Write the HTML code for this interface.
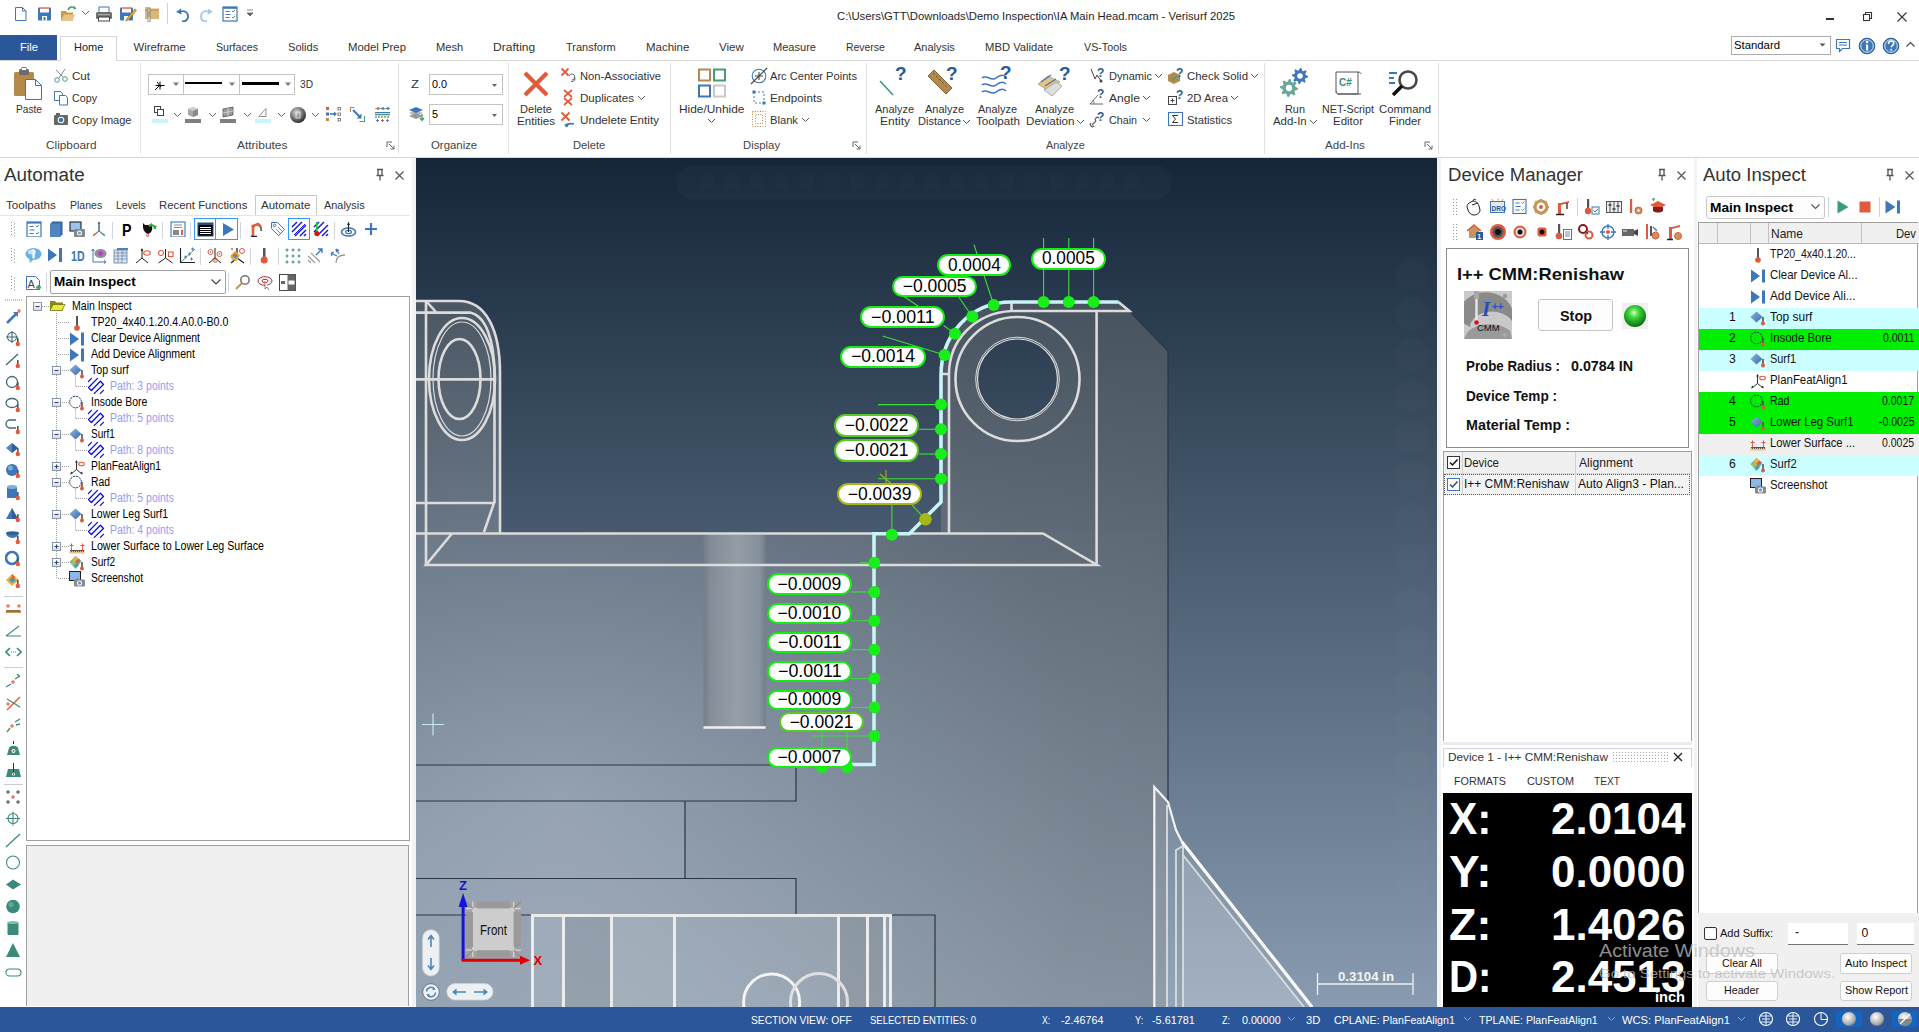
<!DOCTYPE html><html><head><meta charset="utf-8"><style>
*{margin:0;padding:0;box-sizing:border-box}
html,body{width:1919px;height:1032px;overflow:hidden;background:#fff;position:relative;font-family:"Liberation Sans",sans-serif}
.a{position:absolute;display:block}
.t{position:absolute;white-space:nowrap;line-height:1;transform-origin:0 0;font-family:"Liberation Sans",sans-serif}
</style></head><body><div class="t" style="left:837.00px;top:11.43px;font-size:11.3px;color:#1e1e1e;">C:\Users\GTT\Downloads\Demo Inspection\IA Main Head.mcam - Verisurf 2025</div>
<div class="a" style="left:1826px;top:18px;width:7.5px;height:1.6px;background:#333;"></div>
<svg class="a" style="left:1860px;top:10px;" width="14" height="14" viewBox="0 0 14 14"><path d="M3.5 4.5h6v6h-6z M5.5 4.5v-2h6v6h-2" fill="none" stroke="#333" stroke-width="1.1"/></svg>
<svg class="a" style="left:1895px;top:10px;" width="14" height="14" viewBox="0 0 14 14"><path d="M2.5 2.5l9 9M11.5 2.5l-9 9" stroke="#333" stroke-width="1.1"/></svg>
<div class="a" style="left:0px;top:60px;width:1919px;height:1px;background:#d6d6d6;"></div>
<div class="a" style="left:0px;top:35px;width:57px;height:25px;background:#2b579a;"></div>
<div class="t" style="left:20.00px;top:42.43px;font-size:11.3px;color:#fff;transform:scaleX(0.9879);">File</div>
<div class="a" style="left:60px;top:36px;width:57px;height:25px;background:#fff;border:1px solid #d6d6d6;border-bottom:none"></div>
<div class="t" style="left:74.30px;top:42.43px;font-size:11.3px;color:#222;transform:scaleX(0.9754);">Home</div>
<div class="t" style="left:133.50px;top:42.43px;font-size:11.3px;color:#333;">Wireframe</div>
<div class="t" style="left:216.20px;top:42.43px;font-size:11.3px;color:#333;transform:scaleX(0.9416);">Surfaces</div>
<div class="t" style="left:288.00px;top:42.43px;font-size:11.3px;color:#333;transform:scaleX(0.9817);">Solids</div>
<div class="t" style="left:348.20px;top:42.43px;font-size:11.3px;color:#333;transform:scaleX(1.0035);">Model Prep</div>
<div class="t" style="left:436.20px;top:42.43px;font-size:11.3px;color:#333;transform:scaleX(0.9881);">Mesh</div>
<div class="t" style="left:493.20px;top:42.43px;font-size:11.3px;color:#333;transform:scaleX(1.0688);">Drafting</div>
<div class="t" style="left:565.70px;top:42.43px;font-size:11.3px;color:#333;transform:scaleX(0.9750);">Transform</div>
<div class="t" style="left:646.20px;top:42.43px;font-size:11.3px;color:#333;transform:scaleX(1.0137);">Machine</div>
<div class="t" style="left:718.70px;top:42.43px;font-size:11.3px;color:#333;transform:scaleX(1.0278);">View</div>
<div class="t" style="left:773.20px;top:42.43px;font-size:11.3px;color:#333;transform:scaleX(0.9782);">Measure</div>
<div class="t" style="left:846.00px;top:42.43px;font-size:11.3px;color:#333;transform:scaleX(0.9224);">Reverse</div>
<div class="t" style="left:913.80px;top:42.43px;font-size:11.3px;color:#333;transform:scaleX(0.9699);">Analysis</div>
<div class="t" style="left:985.40px;top:42.43px;font-size:11.3px;color:#333;transform:scaleX(0.9963);">MBD Validate</div>
<div class="t" style="left:1083.60px;top:42.43px;font-size:11.3px;color:#333;transform:scaleX(0.9485);">VS-Tools</div>
<div class="a" style="left:1731px;top:36px;width:100px;height:19px;background:#fff;border:1px solid #adadad"></div>
<div class="t" style="left:1734.00px;top:40.43px;font-size:11.3px;color:#000;transform:scaleX(1.0033);">Standard</div>
<svg class="a" style="left:1818px;top:42px;" width="10" height="6" viewBox="0 0 10 6"><path d="M1.5 1.5h6l-3 3z" fill="#555"/></svg>
<div class="a" style="left:0px;top:157px;width:1919px;height:1px;background:#d6d6d6;"></div>
<div class="a" style="left:140px;top:63px;width:1px;height:91px;background:#e1e1e1;"></div>
<div class="a" style="left:398px;top:63px;width:1px;height:91px;background:#e1e1e1;"></div>
<div class="a" style="left:508px;top:63px;width:1px;height:91px;background:#e1e1e1;"></div>
<div class="a" style="left:670px;top:63px;width:1px;height:91px;background:#e1e1e1;"></div>
<div class="a" style="left:866px;top:63px;width:1px;height:91px;background:#e1e1e1;"></div>
<div class="a" style="left:1264px;top:63px;width:1px;height:91px;background:#e1e1e1;"></div>
<div class="a" style="left:1438px;top:63px;width:1px;height:91px;background:#e1e1e1;"></div>
<div class="t" style="left:46.20px;top:140.43px;font-size:11.3px;color:#444;transform:scaleX(1.0442);">Clipboard</div>
<div class="t" style="left:237.00px;top:140.43px;font-size:11.3px;color:#444;transform:scaleX(1.0578);">Attributes</div>
<div class="t" style="left:430.50px;top:140.43px;font-size:11.3px;color:#444;transform:scaleX(1.0076);">Organize</div>
<div class="t" style="left:573.20px;top:140.43px;font-size:11.3px;color:#444;transform:scaleX(0.9891);">Delete</div>
<div class="t" style="left:743.00px;top:140.43px;font-size:11.3px;color:#444;">Display</div>
<div class="t" style="left:1045.80px;top:140.43px;font-size:11.3px;color:#444;transform:scaleX(0.9627);">Analyze</div>
<div class="t" style="left:1324.60px;top:140.43px;font-size:11.3px;color:#444;transform:scaleX(1.0242);">Add-Ins</div>
<svg class="a" style="left:386px;top:141px;" width="9" height="9" viewBox="0 0 9 9"><path d="M1 6V1h5 M3 3l5 5 M8 4.5V8H4.5" fill="none" stroke="#666" stroke-width="1"/></svg>
<svg class="a" style="left:852px;top:141px;" width="9" height="9" viewBox="0 0 9 9"><path d="M1 6V1h5 M3 3l5 5 M8 4.5V8H4.5" fill="none" stroke="#666" stroke-width="1"/></svg>
<svg class="a" style="left:1424px;top:141px;" width="9" height="9" viewBox="0 0 9 9"><path d="M1 6V1h5 M3 3l5 5 M8 4.5V8H4.5" fill="none" stroke="#666" stroke-width="1"/></svg>
<div class="t" style="left:15.50px;top:104.43px;font-size:11.3px;color:#333;transform:scaleX(0.8997);">Paste</div>
<div class="t" style="left:72.00px;top:70.93px;font-size:11.3px;color:#333;transform:scaleX(1.0244);">Cut</div>
<div class="t" style="left:72.00px;top:92.93px;font-size:11.3px;color:#333;transform:scaleX(0.9475);">Copy</div>
<div class="t" style="left:72.00px;top:114.93px;font-size:11.3px;color:#333;transform:scaleX(0.9764);">Copy Image</div>
<div class="a" style="left:148px;top:74px;width:147px;height:21px;background:#fff;border:1px solid #c3c3c3"></div>
<div class="a" style="left:183px;top:74px;width:1px;height:21px;background:#c3c3c3;"></div>
<div class="a" style="left:239px;top:74px;width:1px;height:21px;background:#c3c3c3;"></div>
<div class="t" style="left:300.00px;top:79.43px;font-size:11.3px;color:#333;transform:scaleX(0.9005);">3D</div>
<div class="t" style="left:411.00px;top:79.43px;font-size:11.3px;color:#333;transform:scaleX(1.1606);">Z</div>
<div class="a" style="left:429px;top:74px;width:74px;height:21px;background:#fff;border:1px solid #c3c3c3"></div>
<div class="t" style="left:432.00px;top:79.43px;font-size:11.3px;color:#000;transform:scaleX(0.9550);">0.0</div>
<div class="a" style="left:429px;top:104px;width:74px;height:21px;background:#fff;border:1px solid #c3c3c3"></div>
<div class="t" style="left:432.00px;top:109.43px;font-size:11.3px;color:#000;transform:scaleX(0.9567);">5</div>
<svg class="a" style="left:491px;top:83px;" width="8" height="5" viewBox="0 0 8 5"><path d="M1 1h5l-2.5 3z" fill="#666"/></svg>
<svg class="a" style="left:491px;top:113px;" width="8" height="5" viewBox="0 0 8 5"><path d="M1 1h5l-2.5 3z" fill="#666"/></svg>
<div class="t" style="left:520.00px;top:103.93px;font-size:11.3px;color:#333;transform:scaleX(0.9799);">Delete</div>
<div class="t" style="left:517.00px;top:116.43px;font-size:11.3px;color:#333;transform:scaleX(1.0253);">Entities</div>
<div class="t" style="left:580.00px;top:70.93px;font-size:11.3px;color:#333;transform:scaleX(0.9921);">Non-Associative</div>
<div class="t" style="left:580.00px;top:92.93px;font-size:11.3px;color:#333;transform:scaleX(1.0233);">Duplicates</div>
<div class="t" style="left:580.00px;top:114.93px;font-size:11.3px;color:#333;transform:scaleX(1.0308);">Undelete Entity</div>
<div class="t" style="left:678.75px;top:103.93px;font-size:11.3px;color:#333;transform:scaleX(1.0534);">Hide/Unhide</div>
<div class="t" style="left:770.00px;top:70.93px;font-size:11.3px;color:#333;transform:scaleX(0.9823);">Arc Center Points</div>
<div class="t" style="left:770.00px;top:92.93px;font-size:11.3px;color:#333;transform:scaleX(1.0347);">Endpoints</div>
<div class="t" style="left:770.00px;top:114.93px;font-size:11.3px;color:#333;transform:scaleX(0.9892);">Blank</div>
<div class="t" style="left:875.00px;top:103.93px;font-size:11.3px;color:#333;transform:scaleX(0.9702);">Analyze</div>
<div class="t" style="left:879.50px;top:116.43px;font-size:11.3px;color:#333;transform:scaleX(1.0619);">Entity</div>
<div class="t" style="left:925.00px;top:103.93px;font-size:11.3px;color:#333;transform:scaleX(0.9702);">Analyze</div>
<div class="t" style="left:918.10px;top:116.43px;font-size:11.3px;color:#333;transform:scaleX(0.9782);">Distance</div>
<div class="t" style="left:978.00px;top:103.93px;font-size:11.3px;color:#333;transform:scaleX(0.9702);">Analyze</div>
<div class="t" style="left:975.50px;top:116.43px;font-size:11.3px;color:#333;transform:scaleX(1.0301);">Toolpath</div>
<div class="t" style="left:1034.50px;top:103.93px;font-size:11.3px;color:#333;transform:scaleX(0.9702);">Analyze</div>
<div class="t" style="left:1025.75px;top:116.43px;font-size:11.3px;color:#333;transform:scaleX(1.0293);">Deviation</div>
<div class="t" style="left:1109.00px;top:70.93px;font-size:11.3px;color:#333;transform:scaleX(0.9782);">Dynamic</div>
<div class="t" style="left:1109.00px;top:92.93px;font-size:11.3px;color:#333;transform:scaleX(1.0727);">Angle</div>
<div class="t" style="left:1109.00px;top:114.93px;font-size:11.3px;color:#333;transform:scaleX(0.9485);">Chain</div>
<div class="t" style="left:1187.00px;top:70.93px;font-size:11.3px;color:#333;transform:scaleX(1.0119);">Check Solid</div>
<div class="t" style="left:1187.00px;top:92.93px;font-size:11.3px;color:#333;transform:scaleX(1.0037);">2D Area</div>
<div class="t" style="left:1187.00px;top:114.93px;font-size:11.3px;color:#333;transform:scaleX(0.9956);">Statistics</div>
<div class="t" style="left:1285.00px;top:103.93px;font-size:11.3px;color:#333;transform:scaleX(0.9645);">Run</div>
<div class="t" style="left:1273.30px;top:116.43px;font-size:11.3px;color:#333;transform:scaleX(1.0118);">Add-In</div>
<div class="t" style="left:1322.00px;top:103.93px;font-size:11.3px;color:#333;transform:scaleX(0.9518);">NET-Script</div>
<div class="t" style="left:1333.00px;top:116.43px;font-size:11.3px;color:#333;transform:scaleX(1.0162);">Editor</div>
<div class="t" style="left:1379.00px;top:103.93px;font-size:11.3px;color:#333;">Command</div>
<div class="t" style="left:1389.00px;top:116.43px;font-size:11.3px;color:#333;">Finder</div>
<div class="a" style="left:416px;top:158px;width:1021px;height:849px;background:linear-gradient(#15263a,#889bb0);"></div>
<div class="a" style="left:412px;top:158px;width:4px;height:849px;background:#f3f3f3;"></div>
<div class="a" style="left:1437px;top:158px;width:4px;height:849px;background:#f3f3f3;"></div>
<div class="a" style="left:1694px;top:158px;width:3px;height:849px;background:#f3f3f3;"></div>
<div class="a" style="left:0px;top:1007px;width:1919px;height:25px;background:#2b579a;"></div>
<div class="t" style="left:751.30px;top:1014.18px;font-size:11.6px;color:#fff;transform:scaleX(0.8845);">SECTION VIEW: OFF</div>
<div class="t" style="left:870.00px;top:1014.18px;font-size:11.6px;color:#fff;transform:scaleX(0.8181);">SELECTED ENTITIES: 0</div>
<div class="t" style="left:1041.80px;top:1014.18px;font-size:11.6px;color:#fff;transform:scaleX(0.7480);">X:</div>
<div class="t" style="left:1060.60px;top:1014.18px;font-size:11.6px;color:#fff;transform:scaleX(0.9259);">-2.46764</div>
<div class="t" style="left:1134.80px;top:1014.18px;font-size:11.6px;color:#fff;transform:scaleX(0.7943);">Y:</div>
<div class="t" style="left:1152.00px;top:1014.18px;font-size:11.6px;color:#fff;transform:scaleX(0.9347);">-5.61781</div>
<div class="t" style="left:1221.90px;top:1014.18px;font-size:11.6px;color:#fff;transform:scaleX(0.7868);">Z:</div>
<div class="t" style="left:1242.00px;top:1014.18px;font-size:11.6px;color:#fff;transform:scaleX(0.9229);">0.00000</div>
<div class="t" style="left:1305.70px;top:1014.18px;font-size:11.6px;color:#fff;transform:scaleX(0.9650);">3D</div>
<div class="t" style="left:1334.40px;top:1014.18px;font-size:11.6px;color:#fff;transform:scaleX(0.9191);">CPLANE: PlanFeatAlign1</div>
<div class="t" style="left:1479.30px;top:1014.18px;font-size:11.6px;color:#fff;transform:scaleX(0.9114);">TPLANE: PlanFeatAlign1</div>
<div class="t" style="left:1622.00px;top:1014.18px;font-size:11.6px;color:#fff;transform:scaleX(0.9628);">WCS: PlanFeatAlign1</div>
<svg class="a" style="left:1286.7px;top:1016px;" width="9" height="6" viewBox="0 0 9 6"><path d="M1 1l3.5 3.5L8 1" fill="none" stroke="#8fa8d0" stroke-width="1"/></svg>
<svg class="a" style="left:1463px;top:1016px;" width="9" height="6" viewBox="0 0 9 6"><path d="M1 1l3.5 3.5L8 1" fill="none" stroke="#8fa8d0" stroke-width="1"/></svg>
<svg class="a" style="left:1607px;top:1016px;" width="9" height="6" viewBox="0 0 9 6"><path d="M1 1l3.5 3.5L8 1" fill="none" stroke="#8fa8d0" stroke-width="1"/></svg>
<svg class="a" style="left:1737px;top:1016px;" width="9" height="6" viewBox="0 0 9 6"><path d="M1 1l3.5 3.5L8 1" fill="none" stroke="#8fa8d0" stroke-width="1"/></svg>
<svg class="a" style="left:0;top:0" width="1919" height="1032" viewBox="0 0 1919 1032"><defs><linearGradient id="vbg" x1="0" y1="158" x2="0" y2="1007" gradientUnits="userSpaceOnUse"><stop offset="0" stop-color="#15263a"/><stop offset="1" stop-color="#889bb0"/></linearGradient><linearGradient id="hl" x1="416" y1="600" x2="1168" y2="800" gradientUnits="userSpaceOnUse"><stop offset="0" stop-color="#b8d0ea" stop-opacity="0.15"/><stop offset="0.45" stop-color="#b8d0ea" stop-opacity="0.09"/><stop offset="1" stop-color="#fff" stop-opacity="0"/></linearGradient><linearGradient id="pin" x1="703.5" y1="0" x2="765.7" y2="0" gradientUnits="userSpaceOnUse"><stop offset="0" stop-color="#737d8a"/><stop offset="0.12" stop-color="#858f9a"/><stop offset="0.55" stop-color="#97a1ab"/><stop offset="0.9" stop-color="#8a949f"/><stop offset="1" stop-color="#737d8a"/></linearGradient><clipPath id="vclip"><rect x="416" y="158" width="1021" height="849"/></clipPath><radialGradient id="bodyg" cx="560" cy="800" r="700" fx="560" fy="800" gradientUnits="userSpaceOnUse"><stop offset="0" stop-color="#d0d4d8"/><stop offset="0.4" stop-color="#a6aaae"/><stop offset="0.75" stop-color="#888888"/><stop offset="1" stop-color="#808080"/></radialGradient></defs><g clip-path="url(#vclip)"><rect x="416" y="158" width="1021" height="849" fill="url(#vbg)"/><rect x="676" y="165" width="496" height="34" rx="17" fill="#9ab" fill-opacity="0.035"/><rect x="700" y="175" width="14" height="14" rx="2" fill="#fff" fill-opacity="0.01"/><rect x="725" y="175" width="14" height="14" rx="2" fill="#fff" fill-opacity="0.01"/><rect x="750" y="175" width="14" height="14" rx="2" fill="#fff" fill-opacity="0.01"/><rect x="775" y="175" width="14" height="14" rx="2" fill="#fff" fill-opacity="0.01"/><rect x="800" y="175" width="14" height="14" rx="2" fill="#fff" fill-opacity="0.01"/><rect x="825" y="175" width="14" height="14" rx="2" fill="#fff" fill-opacity="0.01"/><rect x="850" y="175" width="14" height="14" rx="2" fill="#fff" fill-opacity="0.01"/><rect x="875" y="175" width="14" height="14" rx="2" fill="#fff" fill-opacity="0.01"/><rect x="900" y="175" width="14" height="14" rx="2" fill="#fff" fill-opacity="0.01"/><rect x="925" y="175" width="14" height="14" rx="2" fill="#fff" fill-opacity="0.01"/><rect x="950" y="175" width="14" height="14" rx="2" fill="#fff" fill-opacity="0.01"/><rect x="975" y="175" width="14" height="14" rx="2" fill="#fff" fill-opacity="0.01"/><rect x="1000" y="175" width="14" height="14" rx="2" fill="#fff" fill-opacity="0.01"/><rect x="1025" y="175" width="14" height="14" rx="2" fill="#fff" fill-opacity="0.01"/><rect x="1050" y="175" width="14" height="14" rx="2" fill="#fff" fill-opacity="0.01"/><rect x="1075" y="175" width="14" height="14" rx="2" fill="#fff" fill-opacity="0.01"/><rect x="1100" y="175" width="14" height="14" rx="2" fill="#fff" fill-opacity="0.01"/><rect x="1125" y="175" width="14" height="14" rx="2" fill="#fff" fill-opacity="0.01"/><circle cx="1412" cy="273" r="17" fill="#fff" fill-opacity="0.015"/><circle cx="1412" cy="314" r="17" fill="#fff" fill-opacity="0.015"/><circle cx="1412" cy="355" r="17" fill="#fff" fill-opacity="0.015"/><circle cx="1412" cy="396" r="17" fill="#fff" fill-opacity="0.015"/><circle cx="1412" cy="437" r="17" fill="#fff" fill-opacity="0.015"/><circle cx="1412" cy="478" r="17" fill="#fff" fill-opacity="0.015"/><circle cx="1412" cy="519" r="17" fill="#fff" fill-opacity="0.015"/><circle cx="1412" cy="560" r="17" fill="#fff" fill-opacity="0.015"/><circle cx="1412" cy="601" r="17" fill="#fff" fill-opacity="0.015"/><circle cx="1412" cy="642" r="17" fill="#fff" fill-opacity="0.015"/><circle cx="1412" cy="683" r="17" fill="#fff" fill-opacity="0.015"/><circle cx="1412" cy="724" r="17" fill="#fff" fill-opacity="0.015"/><circle cx="1412" cy="765" r="17" fill="#fff" fill-opacity="0.015"/><circle cx="1412" cy="806" r="17" fill="#fff" fill-opacity="0.015"/><circle cx="1412" cy="847" r="17" fill="#fff" fill-opacity="0.015"/><circle cx="1412" cy="888" r="17" fill="#fff" fill-opacity="0.015"/><path d="M416 533 H1168 V1007 H416 Z" fill="url(#bodyg)" fill-opacity="0.36"/><path d="M416 301 H459 C486 301 500 330 500 373 V533 H416 Z" fill="url(#bodyg)" fill-opacity="0.36"/><path d="M941 533 V375 C941 330 970 302 1011 302 H1118.5 L1129.3 311.2 L1168 351 V533 Z" fill="url(#bodyg)" fill-opacity="0.36"/><path d="M452 533 H1043 L1097 565 H426 Z" fill="#000" fill-opacity="0.02"/><circle cx="1017.5" cy="379" r="40" fill="url(#vbg)"/><path d="M416 533 H1168 V1007 H416 Z" fill="url(#hl)" fill-opacity="0.3"/><rect x="416" y="801" width="269" height="78" fill="#fff" fill-opacity="0.05"/><rect x="416" y="765" width="380" height="36" fill="#fff" fill-opacity="0.03"/><rect x="416" y="879" width="380" height="36" fill="#fff" fill-opacity="0.04"/><rect x="532" y="915" width="359" height="92" fill="#fff" fill-opacity="0.09"/><rect x="838" y="915" width="47" height="92" fill="#000" fill-opacity="0.06"/><rect x="703.5" y="535" width="62.2" height="193" fill="url(#pin)" fill-opacity="0.9"/><path d="M703.5 727.5 H765.7" stroke="#f0f0f0" stroke-width="2.4"/><path d="M1129.3 311.2 L1168 351 V802" stroke="#2c3642" stroke-width="1.2" fill="none"/><path d="M416 765 H870 M416 801 H796 V765 M685 801 V878.5 M416 878.5 H796 V915 M416 915 H935 V1007" stroke="#2c3642" stroke-width="1.2" fill="none"/><path d="M416 301 H459 C486 301 500 330 500 373 V533" stroke="#dcdcdc" stroke-width="2.6" fill="none"/><path d="M416 312.6 H470 C486 316 494 340 494.5 373 V503" stroke="#dcdcdc" stroke-width="2.6" fill="none"/><path d="M426 301 V565 M416 379.4 H494 M416 503 H494 L484 532" stroke="#dcdcdc" stroke-width="2.6" fill="none"/><ellipse cx="462" cy="379" rx="33" ry="61" stroke="#dcdcdc" stroke-width="2.6" fill="none"/><ellipse cx="462" cy="379" rx="29" ry="57" stroke="#dcdcdc" stroke-width="1.2" fill="none"/><ellipse cx="459.5" cy="379" rx="21" ry="40" stroke="#dcdcdc" stroke-width="2.6" fill="none"/><path d="M426 301 L436 312" stroke="#dcdcdc" stroke-width="2.6" fill="none"/><path d="M416 533.5 H1043 L1097 565 H426 L452 533.5" stroke="#dcdcdc" stroke-width="2.6" fill="none"/><path d="M1011.5 311 H1129.3 L1118.5 302 M1011.5 302 V311 M1011.5 311 C975 313 949 340 949 374 V533 M941 374 H949 M1096.6 311 V565" stroke="#dcdcdc" stroke-width="2.6" fill="none"/><circle cx="1017.5" cy="379" r="62" stroke="#dcdcdc" stroke-width="2.6" fill="none"/><circle cx="1017.5" cy="379" r="40" stroke="#dcdcdc" stroke-width="1.2" fill="none"/><circle cx="1017.5" cy="379" r="41.8" stroke="#dcdcdc" stroke-width="1" fill="none"/><rect x="563.5" y="915" width="47" height="92" fill="#000" fill-opacity="0.07"/><rect x="611" y="915" width="63" height="92" fill="#fff" fill-opacity="0.04"/><path d="M532.5 1007 V915.5 H890.5 V1007 M563.5 915 V1007 M611.5 915 V1007 M674.5 915 V1007 M838.5 915 V1007 M867.5 915 V1007 M884.5 915 V1007" stroke="#ececec" stroke-width="3" fill="none"/><circle cx="771.6" cy="1002" r="28" stroke="#f4f4f4" stroke-width="3" fill="none"/><circle cx="819" cy="1002" r="28.5" stroke="#e0e0e0" stroke-width="3" fill="none"/><path d="M1154 787 L1168 802 L1178 836 L1312 1007 H1154 Z" fill="#fff" fill-opacity="0.1"/><path d="M1183 855 L1304 1007 H1183 Z" fill="#fff" fill-opacity="0.14"/><path d="M1154.3 1007 V787 L1168 802 L1176 830 L1182 842 L1312 1007" stroke="#f4f4f4" stroke-width="2.2" fill="none"/><path d="M1167 1007 V805 M1176 1007 V850 L1183 846 V1007 M1183 855 L1304 1007" stroke="#dcdcdc" stroke-width="1.8" fill="none"/><path d="M1182 842 L1312 1007" stroke="#fafafa" stroke-width="3.2"/><path d="M422 724.5 H444 M433 713.5 V735.5" stroke="#bfe8f0" stroke-width="1.2"/><path d="M1317 984 H1413.5 M1317.5 973 V995 M1413 973 V995" stroke="#f0f0f0" stroke-width="1.3"/></g></svg>
<div class="t" style="left:1338.40px;top:971.42px;font-size:12.5px;color:#f4f4f4;font-weight:bold;transform:scaleX(1.0604);">0.3104 in</div>
<svg class="a" style="left:0;top:0" width="1919" height="1032" viewBox="0 0 1919 1032"><g clip-path="url(#vclip2)"><clipPath id="vclip2"><rect x="416" y="158" width="1021" height="849"/></clipPath><path d="M1118.6 302 H1011.6 C970 302 941 335 941 375.5 V502 L909.4 533.7 H874 V764.5 H849" stroke="#c8f4f8" stroke-width="3.6" fill="none"/><path d="M974 244.7 L993.7 305" stroke="#3cdc3c" stroke-width="1.1"/><path d="M1043.6 238 L1043.6 302" stroke="#3cdc3c" stroke-width="1.1"/><path d="M1068.8 238 L1068.8 302" stroke="#3cdc3c" stroke-width="1.1"/><path d="M1093.6 238 L1093.6 302" stroke="#3cdc3c" stroke-width="1.1"/><path d="M958.4 296.5 L972.3 316.6" stroke="#3cdc3c" stroke-width="1.1"/><path d="M904 296.5 L919 306.7" stroke="#3cdc3c" stroke-width="1.1"/><path d="M943.6 325.5 L955 333.7" stroke="#3cdc3c" stroke-width="1.1"/><path d="M882.6 336 L944.6 355" stroke="#3cdc3c" stroke-width="1.1"/><path d="M878 404.6 L941 404.6" stroke="#3cdc3c" stroke-width="1.1"/><path d="M919 429.3 L941 429.3" stroke="#3cdc3c" stroke-width="1.1"/><path d="M919 454 L941 454" stroke="#3cdc3c" stroke-width="1.1"/><path d="M878 478.7 L941 478.7" stroke="#3cdc3c" stroke-width="1.1"/><path d="M891.9 486 L891.9 534.8" stroke="#3cdc3c" stroke-width="1.1"/><path d="M912 505 L925.5 519.3" stroke="#3cdc3c" stroke-width="1.1"/><path d="M851 592 L874.4 592" stroke="#3cdc3c" stroke-width="1.1"/><path d="M851 620.7 L874.4 620.7" stroke="#3cdc3c" stroke-width="1.1"/><path d="M851 649.7 L874.4 649.7" stroke="#3cdc3c" stroke-width="1.1"/><path d="M851 678.6 L874.4 678.6" stroke="#3cdc3c" stroke-width="1.1"/><path d="M851 707.5 L874.4 707.5" stroke="#3cdc3c" stroke-width="1.1"/><path d="M811 736 L874.4 736" stroke="#3cdc3c" stroke-width="1.1"/><path d="M822 731 L822 767" stroke="#3cdc3c" stroke-width="1.1"/><path d="M847 731 L847 767" stroke="#3cdc3c" stroke-width="1.1"/><path d="M860 562.7 L874.4 562.7" stroke="#3cdc3c" stroke-width="1.1"/><path d="M880 474 L895 487 M886 470 V486" stroke="#9ab51a" stroke-width="1.1"/><circle cx="993.7" cy="305" r="6" fill="#18ee18"/><circle cx="1043.6" cy="302" r="6" fill="#18ee18"/><circle cx="1068.8" cy="302" r="6" fill="#18ee18"/><circle cx="1093.6" cy="302" r="6" fill="#18ee18"/><circle cx="972.3" cy="316.6" r="6" fill="#18ee18"/><circle cx="955" cy="333.7" r="6" fill="#18ee18"/><circle cx="944.6" cy="355" r="6" fill="#18ee18"/><circle cx="941" cy="404.6" r="6" fill="#18ee18"/><circle cx="941" cy="429.3" r="6" fill="#18ee18"/><circle cx="941" cy="454" r="6" fill="#18ee18"/><circle cx="941" cy="478.7" r="6" fill="#18ee18"/><circle cx="891.9" cy="534.8" r="6" fill="#18ee18"/><circle cx="874.4" cy="562.7" r="6" fill="#18ee18"/><circle cx="874.4" cy="592" r="6" fill="#18ee18"/><circle cx="874.4" cy="620.7" r="6" fill="#18ee18"/><circle cx="874.4" cy="649.7" r="6" fill="#18ee18"/><circle cx="874.4" cy="678.6" r="6" fill="#18ee18"/><circle cx="874.4" cy="707.5" r="6" fill="#18ee18"/><circle cx="874.4" cy="736" r="6" fill="#18ee18"/><circle cx="822" cy="767" r="6" fill="#18ee18"/><circle cx="847" cy="767" r="6" fill="#18ee18"/><circle cx="925.5" cy="519.3" r="6.2" fill="#a6b818"/></g></svg>
<div class="a" style="left:936.7px;top:254.2px;width:74.6px;height:22.2px;background:#fff;border:2.3px solid #14ec14;border-radius:11.1px"></div>
<div class="t" style="left:947.65px;top:256.78px;font-size:17.5px;color:#000;transform:scaleX(0.9849);">0.0004</div>
<div class="a" style="left:1030.7px;top:247.6px;width:75.6px;height:22.8px;background:#fff;border:2.3px solid #14ec14;border-radius:11.4px"></div>
<div class="t" style="left:1042.15px;top:250.48px;font-size:17.5px;color:#000;transform:scaleX(0.9849);">0.0005</div>
<div class="a" style="left:891.7px;top:275.6px;width:85.6px;height:21.3px;background:#fff;border:2.3px solid #14ec14;border-radius:10.7px"></div>
<div class="t" style="left:902.70px;top:277.73px;font-size:17.5px;color:#000;">−0.0005</div>
<div class="a" style="left:859.7px;top:306.3px;width:85.6px;height:22.1px;background:#fff;border:2.3px solid #14ec14;border-radius:11.1px"></div>
<div class="t" style="left:870.70px;top:308.83px;font-size:17.5px;color:#000;transform:scaleX(1.0187);">−0.0011</div>
<div class="a" style="left:840.1px;top:345.6px;width:85.7px;height:22.5px;background:#fff;border:2.3px solid #14ec14;border-radius:11.2px"></div>
<div class="t" style="left:851.15px;top:348.33px;font-size:17.5px;color:#000;">−0.0014</div>
<div class="a" style="left:833.7px;top:414.1px;width:85.6px;height:22.8px;background:#fff;border:2.3px solid #55cc22;border-radius:11.4px"></div>
<div class="t" style="left:844.70px;top:416.98px;font-size:17.5px;color:#000;">−0.0022</div>
<div class="a" style="left:833.7px;top:438.6px;width:85.6px;height:23.4px;background:#fff;border:2.3px solid #55cc22;border-radius:11.7px"></div>
<div class="t" style="left:844.70px;top:441.78px;font-size:17.5px;color:#000;">−0.0021</div>
<div class="a" style="left:836.7px;top:483.3px;width:85.6px;height:22.1px;background:#fff;border:2.3px solid #a6b818;border-radius:11.1px"></div>
<div class="t" style="left:847.70px;top:485.83px;font-size:17.5px;color:#000;">−0.0039</div>
<div class="a" style="left:766.7px;top:573.3px;width:85.2px;height:21.6px;background:#fff;border:2.3px solid #14ec14;border-radius:10.8px"></div>
<div class="t" style="left:777.50px;top:575.58px;font-size:17.5px;color:#000;">−0.0009</div>
<div class="a" style="left:766.7px;top:602.6px;width:85.2px;height:21.3px;background:#fff;border:2.3px solid #14ec14;border-radius:10.7px"></div>
<div class="t" style="left:777.50px;top:604.73px;font-size:17.5px;color:#000;">−0.0010</div>
<div class="a" style="left:766.7px;top:631.6px;width:85.2px;height:21.3px;background:#fff;border:2.3px solid #14ec14;border-radius:10.7px"></div>
<div class="t" style="left:777.50px;top:633.73px;font-size:17.5px;color:#000;transform:scaleX(1.0187);">−0.0011</div>
<div class="a" style="left:766.7px;top:660.6px;width:85.2px;height:21.2px;background:#fff;border:2.3px solid #14ec14;border-radius:10.6px"></div>
<div class="t" style="left:777.50px;top:662.68px;font-size:17.5px;color:#000;transform:scaleX(1.0187);">−0.0011</div>
<div class="a" style="left:766.7px;top:689.6px;width:85.2px;height:20.8px;background:#fff;border:2.3px solid #14ec14;border-radius:10.4px"></div>
<div class="t" style="left:777.50px;top:691.48px;font-size:17.5px;color:#000;">−0.0009</div>
<div class="a" style="left:779.1px;top:712.4px;width:84.7px;height:19.8px;background:#fff;border:2.3px solid #55cc22;border-radius:9.9px"></div>
<div class="t" style="left:789.65px;top:713.78px;font-size:17.5px;color:#000;">−0.0021</div>
<div class="a" style="left:766.7px;top:746.6px;width:85.2px;height:21.7px;background:#fff;border:2.3px solid #14ec14;border-radius:10.8px"></div>
<div class="t" style="left:777.50px;top:748.93px;font-size:17.5px;color:#000;">−0.0007</div>
<svg class="a" style="left:416px;top:870px;" width="140" height="137" viewBox="0 0 140 137">
      <rect x="49.8" y="31.8" width="55" height="55.2" fill="#a2a2a2"/>
      <path d="M57 31.8h-0.2v55.2M97.6 31.8v55.2M49.8 38.5h55M49.8 80.2h55" stroke="#d6d6d6" stroke-width="1.3"/>
      <rect x="57" y="38.5" width="40.6" height="41.7" fill="#cdcdcd"/>
      <path d="M49.8 31.8l7.2 6.7M104.8 31.8l-7.2 6.7M49.8 87l7.2-6.8M104.8 87l-7.2-6.8" stroke="#8e8e8e" stroke-width="1.2"/>
      <rect x="61" y="31.8" width="33" height="6.7" fill="#9a9a9a"/><rect x="61" y="80.2" width="33" height="6.8" fill="#9a9a9a"/>
      <rect x="49.8" y="42" width="7.2" height="35" fill="#9a9a9a"/><rect x="97.6" y="42" width="7.2" height="35" fill="#9a9a9a"/>
      <path d="M47.1 90.2 V33" stroke="#1414d8" stroke-width="3"/>
      <path d="M42.6 37 L47.1 23 L51.6 37z" fill="#1414d8"/>
      <path d="M45.6 90.2 H105" stroke="#e00000" stroke-width="3"/>
      <path d="M104 85.7 L114 90.2 L104 94.7z" fill="#e00000"/>
      <text x="43" y="20" font-family="Liberation Sans" font-weight="bold" font-size="13" fill="#1414d8">Z</text>
      <text x="117.5" y="95" font-family="Liberation Sans" font-weight="bold" font-size="13" fill="#e00000">X</text>
    </svg>
<div class="t" style="left:480.00px;top:923.02px;font-size:14.5px;color:#111;transform:scaleX(0.7975);">Front</div>
<svg class="a" style="left:421px;top:928px;" width="20" height="50" viewBox="0 0 20 50"><rect x="1.6" y="1.7" width="16.6" height="46.3" rx="8.3" fill="#eef1f4" stroke="#c9cfd6" stroke-width="0.8"/><path d="M10 8v11M7 11.5l3-4 3 4M10 30v11M7 37.5l3 4 3-4" fill="none" stroke="#4a86c0" stroke-width="1.6"/></svg>
<svg class="a" style="left:421px;top:982px;" width="20" height="20" viewBox="0 0 20 20"><circle cx="10" cy="10" r="8.3" fill="#eef1f4" stroke="#666" stroke-width="0.8"/><path d="M5.5 9.5a4.5 4.5 0 0 1 8-2.5M14.5 10.5a4.5 4.5 0 0 1 -8 2.5" fill="none" stroke="#4a86c0" stroke-width="1.5"/><path d="M12 5l2.5 2.5-3 0.8zM8 15l-2.5-2.5 3-0.8z" fill="#4a86c0"/></svg>
<svg class="a" style="left:446px;top:982px;" width="48" height="20" viewBox="0 0 48 20"><rect x="0.8" y="1.6" width="46.2" height="16.4" rx="8.2" fill="#eef1f4" stroke="#c9cfd6" stroke-width="0.8"/><path d="M8 10h12M28 10h12" fill="none" stroke="#4a86c0" stroke-width="1.6"/><path d="M6 10l4.5-3.5v7zM42 10l-4.5-3.5v7z" fill="#4a86c0"/></svg>
<div class="t" style="left:4.40px;top:166.46px;font-size:18px;color:#333;transform:scaleX(1.0462);">Automate</div>
<svg class="a" style="left:374px;top:168px;" width="12" height="14" viewBox="0 0 12 14"><path d="M3 1.5h6M4 1.5v6h4v-6M2.5 7.5h7M6 7.5v5" fill="none" stroke="#555" stroke-width="1.3"/></svg>
<svg class="a" style="left:394px;top:170px;" width="11" height="11" viewBox="0 0 11 11"><path d="M1.5 1.5l8 8M9.5 1.5l-8 8" stroke="#555" stroke-width="1.2"/></svg>
<div class="a" style="left:255px;top:195px;width:62px;height:21px;background:#fff;border:1px solid #c9c9c9;border-bottom:none"></div>
<div class="a" style="left:0px;top:215px;width:410px;height:1px;background:#e6e6e6;"></div>
<div class="t" style="left:6.10px;top:200.13px;font-size:11.3px;color:#333;transform:scaleX(1.0276);">Toolpaths</div>
<div class="t" style="left:70.30px;top:200.13px;font-size:11.3px;color:#333;transform:scaleX(0.9320);">Planes</div>
<div class="t" style="left:116.00px;top:200.13px;font-size:11.3px;color:#333;transform:scaleX(0.9064);">Levels</div>
<div class="t" style="left:159.30px;top:200.13px;font-size:11.3px;color:#333;transform:scaleX(1.0052);">Recent Functions</div>
<div class="t" style="left:261.20px;top:200.13px;font-size:11.3px;color:#333;transform:scaleX(1.0214);">Automate</div>
<div class="t" style="left:324.00px;top:200.13px;font-size:11.3px;color:#333;transform:scaleX(0.9652);">Analysis</div>
<div class="a" style="left:50px;top:270px;width:176px;height:24px;background:#fff;border:1px solid #a0a0a0;border-radius:2px"></div>
<div class="t" style="left:54.00px;top:275.07px;font-size:13.5px;color:#000;font-weight:bold;">Main Inspect</div>
<svg class="a" style="left:210px;top:278px;" width="12" height="8" viewBox="0 0 12 8"><path d="M1.5 1.5l4.5 4.5 4.5-4.5" fill="none" stroke="#444" stroke-width="1.2"/></svg>
<div class="a" style="left:26px;top:296px;width:384px;height:545px;background:#fff;border:1px solid #a0a0a0;border-right-color:#a0a0a0"></div>
<div class="a" style="left:26px;top:845px;width:383px;height:161px;background:#f0f0f0;border:1px solid #a0a0a0;border-bottom:none"></div>
<div class="t" style="left:72.30px;top:299.84px;font-size:12px;color:#000;transform:scaleX(0.8774);">Main Inspect</div>
<div class="t" style="left:91.20px;top:315.84px;font-size:12px;color:#000;transform:scaleX(0.8878);">TP20_4x40.1.20.4.A0.0-B0.0</div>
<div class="t" style="left:91.20px;top:331.84px;font-size:12px;color:#000;transform:scaleX(0.8738);">Clear Device Alignment</div>
<div class="t" style="left:91.20px;top:347.84px;font-size:12px;color:#000;transform:scaleX(0.8851);">Add Device Alignment</div>
<div class="t" style="left:91.20px;top:363.84px;font-size:12px;color:#000;transform:scaleX(0.8825);">Top surf</div>
<div class="t" style="left:110.40px;top:379.84px;font-size:12px;color:#9a9af2;transform:scaleX(0.8722);">Path: 3 points</div>
<div class="t" style="left:91.20px;top:395.84px;font-size:12px;color:#000;transform:scaleX(0.8685);">Insode Bore</div>
<div class="t" style="left:110.40px;top:411.84px;font-size:12px;color:#9a9af2;transform:scaleX(0.8722);">Path: 5 points</div>
<div class="t" style="left:91.20px;top:427.84px;font-size:12px;color:#000;transform:scaleX(0.8298);">Surf1</div>
<div class="t" style="left:110.40px;top:443.84px;font-size:12px;color:#9a9af2;transform:scaleX(0.8722);">Path: 8 points</div>
<div class="t" style="left:91.20px;top:459.84px;font-size:12px;color:#000;transform:scaleX(0.8601);">PlanFeatAlign1</div>
<div class="t" style="left:91.20px;top:475.84px;font-size:12px;color:#000;transform:scaleX(0.8629);">Rad</div>
<div class="t" style="left:110.40px;top:491.84px;font-size:12px;color:#9a9af2;transform:scaleX(0.8722);">Path: 5 points</div>
<div class="t" style="left:91.20px;top:507.84px;font-size:12px;color:#000;transform:scaleX(0.8745);">Lower Leg Surf1</div>
<div class="t" style="left:110.40px;top:523.84px;font-size:12px;color:#9a9af2;transform:scaleX(0.8722);">Path: 4 points</div>
<div class="t" style="left:91.20px;top:539.84px;font-size:12px;color:#000;transform:scaleX(0.8881);">Lower Surface to Lower Leg Surface</div>
<div class="t" style="left:91.20px;top:555.84px;font-size:12px;color:#000;transform:scaleX(0.8368);">Surf2</div>
<div class="t" style="left:91.20px;top:571.84px;font-size:12px;color:#000;transform:scaleX(0.8568);">Screenshot</div>
<svg class="a" style="left:10px;top:221px;" width="6" height="17" viewBox="0 0 6 17"><path d="M1.5 1v15M4.5 2.5v14" stroke="#888" stroke-width="1" stroke-dasharray="1 2"/></svg>
<svg class="a" style="left:10px;top:247px;" width="6" height="17" viewBox="0 0 6 17"><path d="M1.5 1v15M4.5 2.5v14" stroke="#888" stroke-width="1" stroke-dasharray="1 2"/></svg>
<svg class="a" style="left:10px;top:275px;" width="6" height="16" viewBox="0 0 6 16"><path d="M1.5 1v14M4.5 2.5v13" stroke="#888" stroke-width="1" stroke-dasharray="1 2"/></svg>
<svg class="a" style="left:26px;top:221px;" width="16" height="16" viewBox="0 0 16 16"><rect x="1" y="1" width="14" height="15" fill="#fff" stroke="#3d76b9" stroke-width="1.2"/><rect x="1" y="1" width="14" height="1.6" fill="#3d76b9"/><path d="M3.5 5.5h4M3.5 9h5M3.5 12.5h4" stroke="#3d76b9"/><path d="M10 5l1 1 2-2M10 12l1 1 2-2" fill="none" stroke="#4a9a73"/></svg>
<svg class="a" style="left:48px;top:221px;" width="16" height="16" viewBox="0 0 16 16"><path d="M2 3l2-2h10v13l-2 2H2z" fill="#3d76b9"/><path d="M4 1h10v13" fill="none" stroke="#2a5a92"/><rect x="2" y="3" width="10" height="13" fill="#4f86c0"/></svg>
<svg class="a" style="left:69px;top:221px;" width="17" height="16" viewBox="0 0 17 16"><rect x="1" y="1" width="11" height="9" fill="#9cc3ea" stroke="#222" stroke-width="1.1"/><rect x="5" y="8" width="11" height="8" rx="1" fill="#888"/><circle cx="10.5" cy="12" r="2.5" fill="#fff"/><circle cx="10.5" cy="12" r="1.6" fill="#6aa0d8"/></svg>
<svg class="a" style="left:91px;top:221px;" width="16" height="16" viewBox="0 0 16 16"><path d="M8 1v9M8 10l-6 5M8 10l6 5" stroke="#555" stroke-width="1"/><path d="M6.5 3l1.5-2.5 1.5 2.5z" fill="#3d76b9"/><path d="M2 15l1-3 1.5 1.5z" fill="#e05a3c"/><path d="M14 15l-1-3-1.5 1.5z" fill="#4a9a73"/><path d="M8 10l-6 5" stroke="#e05a3c"/><path d="M8 10l6 5" stroke="#4a9a73"/><path d="M8 1v9" stroke="#3d76b9"/></svg>
<div class="a" style="left:112px;top:222px;width:1px;height:17px;background:#d0d5de;"></div>
<div class="t" style="left:122.00px;top:221.61px;font-size:17px;color:#000;font-weight:bold;transform:scaleX(0.8372);">P</div>
<svg class="a" style="left:140px;top:221px;" width="18" height="17" viewBox="0 0 18 17"><path d="M3 2l2 2h5l2-2v4c1 3-1 6-4 7-3-1-5-4-5-7z" fill="#111"/><path d="M9 5c3-2 6 0 6 3" fill="none" stroke="#3aa83a" stroke-width="2.2"/><path d="M13 4l4 1-2 3z" fill="#3aa83a"/><path d="M6 13l1.5 3 1.5-3" fill="none" stroke="#e05a3c"/></svg>
<div class="a" style="left:162px;top:222px;width:1px;height:17px;background:#d0d5de;"></div>
<svg class="a" style="left:170px;top:221px;" width="16" height="16" viewBox="0 0 16 16"><rect x="1" y="1" width="14" height="15" fill="#fff" stroke="#3d76b9" stroke-width="1.1"/><path d="M4 4h8M4 6.5h8" stroke="#888"/><rect x="3" y="9" width="6" height="5" fill="#888"/><rect x="11" y="9" width="2" height="5" fill="#e05a3c"/></svg>
<div class="a" style="left:190px;top:222px;width:1px;height:17px;background:#d0d5de;"></div>
<div class="a" style="left:194px;top:218px;width:22px;height:22px;background:#fff;border:1px solid #3399ff"></div>
<div class="a" style="left:215px;top:218px;width:23px;height:22px;background:#fff;border:1px solid #3399ff"></div>
<svg class="a" style="left:197px;top:222px;" width="17" height="15" viewBox="0 0 17 15"><rect x="0.5" y="0.5" width="16" height="14" fill="#2a4a7a"/><rect x="1.5" y="3" width="14" height="10.5" fill="#000"/><path d="M3 5.5h11M3 7.5h11M3 9.5h11M3 11.5h11" stroke="#fff" stroke-width="1"/></svg>
<svg class="a" style="left:220px;top:221px;" width="16" height="16" viewBox="0 0 16 16"><path d="M3 2l11 6.5-11 6.5z" fill="#3d76b9"/></svg>
<div class="a" style="left:240px;top:222px;width:1px;height:17px;background:#d0d5de;"></div>
<svg class="a" style="left:247px;top:221px;" width="16" height="16" viewBox="0 0 16 16"><path d="M6 15V5l5-2 3 3" fill="none" stroke="#e05a3c" stroke-width="2.5"/><path d="M4 15.5h6" stroke="#222" stroke-width="1.5"/><circle cx="6" cy="5" r="1.6" fill="#e05a3c"/><path d="M14 6v4" stroke="#222" stroke-width="1.2"/></svg>
<svg class="a" style="left:270px;top:221px;" width="16" height="16" viewBox="0 0 16 16"><path d="M1.5 1.5h6l7 7-6 6-7-7z" fill="#fff" stroke="#3d76b9" stroke-width="1"/><circle cx="4.5" cy="4.5" r="1.2" fill="none" stroke="#3d76b9"/><path d="M6 8l4 4M8 6l4 4" stroke="#3d76b9" stroke-width="0.8"/></svg>
<div class="a" style="left:288px;top:218px;width:22px;height:22px;background:#fff;border:1px solid #3399ff"></div>
<svg class="a" style="left:291px;top:221px;" width="16" height="16" viewBox="0 0 16 16"><path d="M1 6l5-5M1 11l10-10M4 15l11-11M9 15l6-6M13 15l2-2" stroke="#1010e0" stroke-width="1.4"/><path d="M3 14l11-11" stroke="#1010e0"/></svg>
<svg class="a" style="left:313px;top:221px;" width="16" height="16" viewBox="0 0 16 16"><path d="M1 6l5-5M1 11l10-10M4 15l11-11M9 15l6-6M13 15l2-2" stroke="#1010e0" stroke-width="1.4"/><rect x="3" y="1" width="1.6" height="11" fill="#22cc22"/><circle cx="3.8" cy="12.5" r="2.5" fill="#e01010"/></svg>
<div class="a" style="left:334px;top:222px;width:1px;height:17px;background:#d0d5de;"></div>
<svg class="a" style="left:340px;top:221px;" width="17" height="17" viewBox="0 0 17 17"><ellipse cx="8.5" cy="11" rx="7" ry="4" fill="none" stroke="#3d76b9" stroke-width="1.6"/><ellipse cx="8.5" cy="11" rx="3" ry="1.6" fill="none" stroke="#3d76b9" stroke-width="1.2"/><path d="M8.5 11V1.5" stroke="#222" stroke-width="1.1"/><path d="M7 4l1.5-3 1.5 3z" fill="#222"/></svg>
<svg class="a" style="left:363px;top:221px;" width="16" height="16" viewBox="0 0 16 16"><path d="M8 2v12M2 8h12" stroke="#3d76b9" stroke-width="2.2"/></svg>
<svg class="a" style="left:25px;top:247px;" width="17" height="17" viewBox="0 0 17 17"><ellipse cx="8.5" cy="7" rx="8" ry="6" fill="#6ab0e0"/><path d="M4 11l1 5 4-4z" fill="#6ab0e0"/><ellipse cx="7" cy="5" rx="4" ry="2.5" fill="#c8e6f8"/><rect x="7.5" y="5.5" width="2.2" height="6" fill="#fff"/><circle cx="8.6" cy="3.5" r="1.2" fill="#fff"/></svg>
<svg class="a" style="left:47px;top:247px;" width="17" height="16" viewBox="0 0 17 16"><path d="M1 1.5l9 6.5-9 6.5z" fill="#3d76b9"/><rect x="12" y="1" width="3" height="14" fill="#3d76b9"/></svg>
<div class="t" style="left:71.00px;top:248.30px;font-size:15px;color:#3d76b9;font-weight:bold;transform:scaleX(0.7045);">1D</div>
<svg class="a" style="left:91px;top:247px;" width="17" height="17" viewBox="0 0 17 17"><path d="M2 2v13h13M2 2l-1.5 2M2 2l1.5 2M15 15l-2-1.5M15 15l-2 1.5" fill="none" stroke="#3d76b9"/><ellipse cx="9.5" cy="6.5" rx="6" ry="4.5" fill="#8f8f9a"/><circle cx="9.5" cy="6.5" r="2.2" fill="#d030c0"/></svg>
<svg class="a" style="left:113px;top:247px;" width="16" height="17" viewBox="0 0 16 17"><rect x="1" y="3" width="13" height="13" fill="#dfe8f2" stroke="#5a80a8" stroke-width="0.8"/><path d="M1 6h13M1 9h13M1 12h13M5 3v13M9 3v13" stroke="#5a80a8" stroke-width="0.7"/><rect x="4" y="1" width="11" height="2" fill="#5a80a8"/><path d="M10 5h3M10 8h3" stroke="#e05a3c" stroke-width="0.7" stroke-dasharray="1 1"/></svg>
<svg class="a" style="left:135px;top:247px;" width="16" height="17" viewBox="0 0 16 17"><path d="M7 2v9M7 11l-6 5M7 11l6 5" stroke="#222" stroke-width="1"/><path d="M5.7 4l1.3-3 1.3 3z" fill="#222"/><ellipse cx="12" cy="6" rx="3.3" ry="2.2" fill="none" stroke="#e05a3c" stroke-width="1.1"/></svg>
<svg class="a" style="left:157px;top:247px;" width="17" height="17" viewBox="0 0 17 17"><path d="M8.5 2v9M8.5 11l-7 5M8.5 11l7 5" stroke="#222" stroke-width="1"/><circle cx="4" cy="6" r="2.5" fill="none" stroke="#e05a3c" stroke-width="1.1"/><rect x="11.5" y="5" width="4.5" height="4.5" fill="none" stroke="#e05a3c" stroke-width="1.1"/></svg>
<svg class="a" style="left:179px;top:247px;" width="17" height="17" viewBox="0 0 17 17"><path d="M1.5 1v14.5H16" fill="none" stroke="#222" stroke-width="1.1"/><path d="M2 15L16 2" stroke="#4a9a73" stroke-width="1"/><path d="M5 10h3M6.5 8.5v3M9 7h3M10.5 5.5v3M11 12h3M12.5 10.5v3M12 2h3M13.5 0.5v3" stroke="#3d76b9" stroke-width="0.9"/></svg>
<div class="a" style="left:200px;top:248px;width:1px;height:17px;background:#d0d5de;"></div>
<svg class="a" style="left:207px;top:247px;" width="16" height="17" viewBox="0 0 16 17"><path d="M8 1v10M8 11l-6 5M8 11l6 5" stroke="#222" stroke-width="1"/><circle cx="3.5" cy="5" r="2.5" fill="none" stroke="#e05a3c"/><circle cx="3.5" cy="5" r="0.8" fill="#3d76b9"/><circle cx="12.5" cy="7" r="2.5" fill="none" stroke="#e05a3c"/><circle cx="12.5" cy="7" r="0.8" fill="#3d76b9"/><circle cx="8" cy="13" r="2.3" fill="none" stroke="#e05a3c"/><circle cx="8" cy="13" r="0.8" fill="#3d76b9"/></svg>
<svg class="a" style="left:229px;top:247px;" width="17" height="17" viewBox="0 0 17 17"><path d="M8 1v10M8 11l-6 5M8 11l7 5" stroke="#222" stroke-width="1.3"/><path d="M1 9l5-5 5 4-3 6-5-1z" fill="#e8b040"/><path d="M3 9l3-3 3 3-2 3z" fill="#40a0c0"/><circle cx="6" cy="8" r="1.4" fill="#e05a3c"/><circle cx="13" cy="4" r="2.5" fill="none" stroke="#e05a3c"/><path d="M2 2h2M3 1v2" stroke="#e05a3c"/></svg>
<div class="a" style="left:250px;top:248px;width:1px;height:17px;background:#d0d5de;"></div>
<svg class="a" style="left:258px;top:247px;" width="12" height="17" viewBox="0 0 12 17"><rect x="5" y="1" width="2.5" height="10" fill="#555"/><circle cx="6.2" cy="13" r="3.5" fill="#e05a3c"/></svg>
<div class="a" style="left:278px;top:248px;width:1px;height:17px;background:#d0d5de;"></div>
<svg class="a" style="left:284px;top:247px;" width="17" height="17" viewBox="0 0 17 17"><g stroke="#3c8a7c" stroke-width="1.1"><path d="M1.5 3h3M3 1.5v3"/><path d="M1.5 9h3M3 7.5v3"/><path d="M1.5 15h3M3 13.5v3"/><path d="M7.5 3h3M9 1.5v3"/><path d="M7.5 9h3M9 7.5v3"/><path d="M7.5 15h3M9 13.5v3"/><path d="M13.5 3h3M15 1.5v3"/><path d="M13.5 9h3M15 7.5v3"/><path d="M13.5 15h3M15 13.5v3"/></g></svg>
<svg class="a" style="left:307px;top:247px;" width="17" height="17" viewBox="0 0 17 17"><path d="M1 9l7 7M1 13l3 3M4 6l9 9" stroke="#9a9a9a" stroke-width="1.2"/><path d="M9 8l6-6M11 2h4v4" fill="none" stroke="#3d76b9" stroke-width="1.3"/></svg>
<svg class="a" style="left:329px;top:247px;" width="17" height="17" viewBox="0 0 17 17"><path d="M7 16c0-5 3-8 9-8" fill="none" stroke="#999" stroke-width="1.3"/><path d="M8 9L2 6M2 6l3-1M2 6l1 3M10 7L7 2M7 2l0.5 3M7 2l3 1.5" fill="none" stroke="#3d76b9" stroke-width="1.2"/></svg>
<svg class="a" style="left:25px;top:275px;" width="17" height="16" viewBox="0 0 17 16"><path d="M1.5 1.5h9l4 4v9h-13z" fill="#fff" stroke="#3d76b9"/><text x="2.5" y="13" font-family="Liberation Sans" font-size="11" fill="#444">A</text><path d="M11 12.5h5M13.5 10v5" stroke="#4a9a73" stroke-width="2"/></svg>
<div class="a" style="left:46px;top:273px;width:1px;height:19px;background:#d0d5de;"></div>
<div class="a" style="left:228px;top:273px;width:1px;height:19px;background:#d0d5de;"></div>
<svg class="a" style="left:235px;top:274px;" width="16" height="16" viewBox="0 0 16 16"><circle cx="10" cy="6" r="4.2" fill="#fff" stroke="#777" stroke-width="1.6"/><path d="M7 9l-6 6" stroke="#c8965a" stroke-width="2.2"/></svg>
<svg class="a" style="left:257px;top:274px;" width="16" height="16" viewBox="0 0 16 16"><ellipse cx="8" cy="7" rx="7" ry="4.3" fill="none" stroke="#b03030" stroke-width="1"/><ellipse cx="8" cy="7" rx="3" ry="1.7" fill="none" stroke="#b03030" stroke-width="1"/><path d="M8 7v8l2-2 2 3" fill="#fff" stroke="#666" stroke-width="0.8"/></svg>
<svg class="a" style="left:279px;top:274px;" width="17" height="17" viewBox="0 0 17 17"><rect x="0.5" y="0.5" width="16" height="16" fill="#fff" stroke="#444"/><rect x="8.5" y="0.5" width="8" height="16" fill="#666"/><rect x="2" y="7" width="4" height="3" fill="#666"/><rect x="9.5" y="6.5" width="6" height="4" fill="#fff"/></svg>
<svg class="a" style="left:0;top:0" width="420" height="600" viewBox="0 0 420 600"><path d="M56.5 313 V578.5 M42 306.5 H50" stroke="#a0a0a0" stroke-width="1" stroke-dasharray="1 1"/><path d="M58 322.5 H69" stroke="#a0a0a0" stroke-width="1" stroke-dasharray="1 1"/><path d="M58 338.5 H69" stroke="#a0a0a0" stroke-width="1" stroke-dasharray="1 1"/><path d="M58 354.5 H69" stroke="#a0a0a0" stroke-width="1" stroke-dasharray="1 1"/><path d="M58 370.5 H69" stroke="#a0a0a0" stroke-width="1" stroke-dasharray="1 1"/><path d="M75.5 376.5 V387.0 M76 386.5 H88" fill="none" stroke="#a0a0a0" stroke-width="1" stroke-dasharray="1 1"/><path d="M58 402.5 H69" stroke="#a0a0a0" stroke-width="1" stroke-dasharray="1 1"/><path d="M75.5 408.5 V419.0 M76 418.5 H88" fill="none" stroke="#a0a0a0" stroke-width="1" stroke-dasharray="1 1"/><path d="M58 434.5 H69" stroke="#a0a0a0" stroke-width="1" stroke-dasharray="1 1"/><path d="M75.5 440.5 V451.0 M76 450.5 H88" fill="none" stroke="#a0a0a0" stroke-width="1" stroke-dasharray="1 1"/><path d="M58 466.5 H69" stroke="#a0a0a0" stroke-width="1" stroke-dasharray="1 1"/><path d="M58 482.5 H69" stroke="#a0a0a0" stroke-width="1" stroke-dasharray="1 1"/><path d="M75.5 488.5 V499.0 M76 498.5 H88" fill="none" stroke="#a0a0a0" stroke-width="1" stroke-dasharray="1 1"/><path d="M58 514.5 H69" stroke="#a0a0a0" stroke-width="1" stroke-dasharray="1 1"/><path d="M75.5 520.5 V531.0 M76 530.5 H88" fill="none" stroke="#a0a0a0" stroke-width="1" stroke-dasharray="1 1"/><path d="M58 546.5 H69" stroke="#a0a0a0" stroke-width="1" stroke-dasharray="1 1"/><path d="M58 562.5 H69" stroke="#a0a0a0" stroke-width="1" stroke-dasharray="1 1"/><path d="M58 578.5 H69" stroke="#a0a0a0" stroke-width="1" stroke-dasharray="1 1"/></svg>
<svg class="a" style="left:33.0px;top:302.0px;" width="9" height="9" viewBox="0 0 9 9"><defs><linearGradient id="exg" x1="0" y1="0" x2="0" y2="1"><stop offset="0" stop-color="#fff"/><stop offset="1" stop-color="#d8d8d8"/></linearGradient></defs><rect x="0.5" y="0.5" width="8" height="8" fill="url(#exg)" stroke="#8a9aa8"/><path d="M2.5 4.5h4" stroke="#2a3a7a" stroke-width="1"/></svg>
<svg class="a" style="left:52.0px;top:366.0px;" width="9" height="9" viewBox="0 0 9 9"><defs><linearGradient id="exg" x1="0" y1="0" x2="0" y2="1"><stop offset="0" stop-color="#fff"/><stop offset="1" stop-color="#d8d8d8"/></linearGradient></defs><rect x="0.5" y="0.5" width="8" height="8" fill="url(#exg)" stroke="#8a9aa8"/><path d="M2.5 4.5h4" stroke="#2a3a7a" stroke-width="1"/></svg>
<svg class="a" style="left:52.0px;top:398.0px;" width="9" height="9" viewBox="0 0 9 9"><defs><linearGradient id="exg" x1="0" y1="0" x2="0" y2="1"><stop offset="0" stop-color="#fff"/><stop offset="1" stop-color="#d8d8d8"/></linearGradient></defs><rect x="0.5" y="0.5" width="8" height="8" fill="url(#exg)" stroke="#8a9aa8"/><path d="M2.5 4.5h4" stroke="#2a3a7a" stroke-width="1"/></svg>
<svg class="a" style="left:52.0px;top:430.0px;" width="9" height="9" viewBox="0 0 9 9"><defs><linearGradient id="exg" x1="0" y1="0" x2="0" y2="1"><stop offset="0" stop-color="#fff"/><stop offset="1" stop-color="#d8d8d8"/></linearGradient></defs><rect x="0.5" y="0.5" width="8" height="8" fill="url(#exg)" stroke="#8a9aa8"/><path d="M2.5 4.5h4" stroke="#2a3a7a" stroke-width="1"/></svg>
<svg class="a" style="left:52.0px;top:462.0px;" width="9" height="9" viewBox="0 0 9 9"><defs><linearGradient id="exg" x1="0" y1="0" x2="0" y2="1"><stop offset="0" stop-color="#fff"/><stop offset="1" stop-color="#d8d8d8"/></linearGradient></defs><rect x="0.5" y="0.5" width="8" height="8" fill="url(#exg)" stroke="#8a9aa8"/><path d="M2.5 4.5h4" stroke="#2a3a7a" stroke-width="1"/><path d="M4.5 2.5v4" stroke="#2a3a7a" stroke-width="1"/></svg>
<svg class="a" style="left:52.0px;top:478.0px;" width="9" height="9" viewBox="0 0 9 9"><defs><linearGradient id="exg" x1="0" y1="0" x2="0" y2="1"><stop offset="0" stop-color="#fff"/><stop offset="1" stop-color="#d8d8d8"/></linearGradient></defs><rect x="0.5" y="0.5" width="8" height="8" fill="url(#exg)" stroke="#8a9aa8"/><path d="M2.5 4.5h4" stroke="#2a3a7a" stroke-width="1"/></svg>
<svg class="a" style="left:52.0px;top:510.0px;" width="9" height="9" viewBox="0 0 9 9"><defs><linearGradient id="exg" x1="0" y1="0" x2="0" y2="1"><stop offset="0" stop-color="#fff"/><stop offset="1" stop-color="#d8d8d8"/></linearGradient></defs><rect x="0.5" y="0.5" width="8" height="8" fill="url(#exg)" stroke="#8a9aa8"/><path d="M2.5 4.5h4" stroke="#2a3a7a" stroke-width="1"/></svg>
<svg class="a" style="left:52.0px;top:542.0px;" width="9" height="9" viewBox="0 0 9 9"><defs><linearGradient id="exg" x1="0" y1="0" x2="0" y2="1"><stop offset="0" stop-color="#fff"/><stop offset="1" stop-color="#d8d8d8"/></linearGradient></defs><rect x="0.5" y="0.5" width="8" height="8" fill="url(#exg)" stroke="#8a9aa8"/><path d="M2.5 4.5h4" stroke="#2a3a7a" stroke-width="1"/><path d="M4.5 2.5v4" stroke="#2a3a7a" stroke-width="1"/></svg>
<svg class="a" style="left:52.0px;top:558.0px;" width="9" height="9" viewBox="0 0 9 9"><defs><linearGradient id="exg" x1="0" y1="0" x2="0" y2="1"><stop offset="0" stop-color="#fff"/><stop offset="1" stop-color="#d8d8d8"/></linearGradient></defs><rect x="0.5" y="0.5" width="8" height="8" fill="url(#exg)" stroke="#8a9aa8"/><path d="M2.5 4.5h4" stroke="#2a3a7a" stroke-width="1"/><path d="M4.5 2.5v4" stroke="#2a3a7a" stroke-width="1"/></svg>
<svg class="a" style="left:49px;top:299px;" width="17" height="13" viewBox="0 0 17 13"><path d="M1 2h5l1 1.5h7v8H1z" fill="#8a8a10"/><path d="M1 11.5l3-6h12l-3 6z" fill="#e8e840" stroke="#6a6a10" stroke-width="0.7"/></svg>
<svg class="a" style="left:69px;top:314.5px;" width="16" height="16" viewBox="0 0 16 16"><rect x="7" y="1" width="2" height="10" fill="#555"/><circle cx="8" cy="13" r="2.8" fill="#e05a3c"/></svg>
<svg class="a" style="left:69px;top:330.5px;" width="16" height="16" viewBox="0 0 16 16"><path d="M1 1.5l9 6.5-9 6.5z" fill="#3d76b9"/><rect x="12" y="1.5" width="3" height="13" fill="#3d76b9"/></svg>
<svg class="a" style="left:69px;top:346.5px;" width="16" height="16" viewBox="0 0 16 16"><path d="M1 1.5l9 6.5-9 6.5z" fill="#3d76b9"/><rect x="12" y="1.5" width="3" height="13" fill="#3d76b9"/></svg>
<svg class="a" style="left:69px;top:362.5px;" width="16" height="16" viewBox="0 0 16 16"><defs><linearGradient id="dg" x1="0" y1="0" x2="1" y2="1"><stop offset="0" stop-color="#8ab4e0"/><stop offset="1" stop-color="#3a6aa8"/></linearGradient></defs><path d="M0.5 7l6-5.5 6 5.5-6 5.5z" fill="url(#dg)"/><rect x="12.2" y="7" width="1.6" height="6" fill="#555"/><circle cx="13" cy="13.5" r="2" fill="#e05a3c"/></svg>
<svg class="a" style="left:69px;top:394.5px;" width="16" height="16" viewBox="0 0 16 16"><circle cx="6.5" cy="7" r="5.8" fill="none" stroke="#203a60" stroke-width="1" stroke-dasharray="2.2 0.8"/><rect x="12.2" y="7" width="1.6" height="6" fill="#555"/><circle cx="13" cy="13.5" r="2" fill="#e05a3c"/></svg>
<svg class="a" style="left:69px;top:426.5px;" width="16" height="16" viewBox="0 0 16 16"><defs><linearGradient id="dg" x1="0" y1="0" x2="1" y2="1"><stop offset="0" stop-color="#8ab4e0"/><stop offset="1" stop-color="#3a6aa8"/></linearGradient></defs><path d="M0.5 7l6-5.5 6 5.5-6 5.5z" fill="url(#dg)"/><rect x="12.2" y="7" width="1.6" height="6" fill="#555"/><circle cx="13" cy="13.5" r="2" fill="#e05a3c"/></svg>
<svg class="a" style="left:69px;top:458.5px;" width="16" height="16" viewBox="0 0 16 16"><path d="M7.5 2v8.5M7.5 10.5l-5.5 4.5M7.5 10.5l5.5 4.5" stroke="#333" stroke-width="1"/><path d="M6 3.5l1.5-2.5 1.5 2.5zM1 15.5l1.2-3 1.5 1.8zM14 15.5l-1.2-3-1.5 1.8z" fill="#333"/><ellipse cx="12.5" cy="5" rx="2.8" ry="1.8" fill="none" stroke="#e05a3c" stroke-width="1.1"/></svg>
<svg class="a" style="left:69px;top:474.5px;" width="16" height="16" viewBox="0 0 16 16"><circle cx="6.5" cy="7" r="5.8" fill="none" stroke="#203a60" stroke-width="1" stroke-dasharray="2.2 0.8"/><rect x="12.2" y="7" width="1.6" height="6" fill="#555"/><circle cx="13" cy="13.5" r="2" fill="#e05a3c"/></svg>
<svg class="a" style="left:69px;top:506.5px;" width="16" height="16" viewBox="0 0 16 16"><defs><linearGradient id="dg" x1="0" y1="0" x2="1" y2="1"><stop offset="0" stop-color="#8ab4e0"/><stop offset="1" stop-color="#3a6aa8"/></linearGradient></defs><path d="M0.5 7l6-5.5 6 5.5-6 5.5z" fill="url(#dg)"/><rect x="12.2" y="7" width="1.6" height="6" fill="#555"/><circle cx="13" cy="13.5" r="2" fill="#e05a3c"/></svg>
<svg class="a" style="left:69px;top:538.5px;" width="16" height="16" viewBox="0 0 16 16"><rect x="0.5" y="11.5" width="15" height="3" fill="#f0c080"/><path d="M1 11.5h14" stroke="#555" stroke-width="1"/><path d="M2.5 11.5v1.5M4.5 11.5v1.5M6.5 11.5v1.5M8.5 11.5v1.5M10.5 11.5v1.5M12.5 11.5v1.5M14.5 11.5v1.5" stroke="#444" stroke-width="0.8"/><path d="M0.5 6.5h4M2.5 4.5v4M11.5 6.5h4M13.5 4.5v4M2.5 8.5v3M13.5 8.5v3" stroke="#e05a3c" stroke-width="1"/></svg>
<svg class="a" style="left:69px;top:554.5px;" width="16" height="16" viewBox="0 0 16 16"><path d="M0.5 7l6-6 6 5-6 8z" fill="#6ab0a8"/><path d="M3 4.5l3.5-3.5 3 2.5-3.5 3.5z" fill="#e8b040"/><path d="M6 7l3.5-3.5 2 2-3 3z" fill="#e05a3c"/><path d="M1.5 8l3-3 2.5 2.5-3 3z" fill="#a0c850"/><path d="M5 11l3-3 2 2-3 3z" fill="#40a0c0"/><rect x="12.2" y="7" width="1.6" height="6" fill="#555"/><circle cx="13" cy="13.5" r="2" fill="#e05a3c"/></svg>
<svg class="a" style="left:69px;top:570.5px;" width="16" height="16" viewBox="0 0 16 16"><rect x="0.5" y="0.5" width="11" height="9" fill="#8cb8e8" stroke="#222" stroke-width="1"/><rect x="5" y="8.5" width="11" height="7" rx="1" fill="#8a8a8a"/><rect x="7" y="7.5" width="3" height="1.5" fill="#8a8a8a"/><circle cx="10.5" cy="12" r="2.6" fill="#fff"/><circle cx="10.5" cy="12" r="1.7" fill="#6aa0d8"/></svg>
<svg class="a" style="left:84px;top:374px;" width="24" height="24" viewBox="0 0 24 24"><path d="M4.4 7.6L7.4 4.4M4.5 13.5L13.5 4.4M4.5 13.5L7.4 16.5L16.4 7.2L19.5 10.5L10.3 19.4M16.4 19.4L19.5 16.4" fill="none" stroke="#0a0ae8" stroke-width="1.3" stroke-linecap="round" stroke-linejoin="round"/></svg>
<svg class="a" style="left:84px;top:406px;" width="24" height="24" viewBox="0 0 24 24"><path d="M4.4 7.6L7.4 4.4M4.5 13.5L13.5 4.4M4.5 13.5L7.4 16.5L16.4 7.2L19.5 10.5L10.3 19.4M16.4 19.4L19.5 16.4" fill="none" stroke="#0a0ae8" stroke-width="1.3" stroke-linecap="round" stroke-linejoin="round"/></svg>
<svg class="a" style="left:84px;top:438px;" width="24" height="24" viewBox="0 0 24 24"><path d="M4.4 7.6L7.4 4.4M4.5 13.5L13.5 4.4M4.5 13.5L7.4 16.5L16.4 7.2L19.5 10.5L10.3 19.4M16.4 19.4L19.5 16.4" fill="none" stroke="#0a0ae8" stroke-width="1.3" stroke-linecap="round" stroke-linejoin="round"/></svg>
<svg class="a" style="left:84px;top:486px;" width="24" height="24" viewBox="0 0 24 24"><path d="M4.4 7.6L7.4 4.4M4.5 13.5L13.5 4.4M4.5 13.5L7.4 16.5L16.4 7.2L19.5 10.5L10.3 19.4M16.4 19.4L19.5 16.4" fill="none" stroke="#0a0ae8" stroke-width="1.3" stroke-linecap="round" stroke-linejoin="round"/></svg>
<svg class="a" style="left:84px;top:518px;" width="24" height="24" viewBox="0 0 24 24"><path d="M4.4 7.6L7.4 4.4M4.5 13.5L13.5 4.4M4.5 13.5L7.4 16.5L16.4 7.2L19.5 10.5L10.3 19.4M16.4 19.4L19.5 16.4" fill="none" stroke="#0a0ae8" stroke-width="1.3" stroke-linecap="round" stroke-linejoin="round"/></svg>
<svg class="a" style="left:4px;top:298px;" width="20" height="4" viewBox="0 0 20 4"><path d="M1 2h18" stroke="#888" stroke-width="1.2" stroke-dasharray="1 1"/></svg>
<svg class="a" style="left:5px;top:308px;" width="17" height="17" viewBox="0 0 17 17"><path d="M2 15l9-9" stroke="#3d76b9" stroke-width="2.5"/><path d="M8 4h5v5z" fill="#3d76b9"/><path d="M12 1h4M14 -1v4" stroke="#e05a3c" stroke-width="1.2" transform="translate(0,2)"/></svg>
<svg class="a" style="left:5px;top:330px;" width="17" height="17" viewBox="0 0 17 17"><circle cx="7" cy="7" r="4.5" fill="none" stroke="#3c6a7a" stroke-width="1.1"/><path d="M7 1v12M1 7h12" stroke="#3c6a7a" stroke-width="1.1"/><rect x="12" y="8" width="1.6" height="6" fill="#555"/><circle cx="12.8" cy="14" r="2.2" fill="#e05a3c"/></svg>
<svg class="a" style="left:5px;top:352px;" width="17" height="17" viewBox="0 0 17 17"><path d="M1 13L13 2" stroke="#3c6a7a" stroke-width="1.3"/><rect x="12" y="8" width="1.6" height="6" fill="#555"/><circle cx="12.8" cy="14" r="2.2" fill="#e05a3c"/></svg>
<svg class="a" style="left:5px;top:374px;" width="17" height="17" viewBox="0 0 17 17"><circle cx="7" cy="8" r="5.5" fill="none" stroke="#3c6a7a" stroke-width="1.3"/><rect x="12" y="8" width="1.6" height="6" fill="#555"/><circle cx="12.8" cy="14" r="2.2" fill="#e05a3c"/></svg>
<svg class="a" style="left:5px;top:396px;" width="17" height="17" viewBox="0 0 17 17"><ellipse cx="7" cy="7" rx="6" ry="4.5" fill="none" stroke="#3c6a7a" stroke-width="1.3"/><rect x="12" y="8" width="1.6" height="6" fill="#555"/><circle cx="12.8" cy="14" r="2.2" fill="#e05a3c"/></svg>
<svg class="a" style="left:5px;top:418px;" width="17" height="17" viewBox="0 0 17 17"><path d="M11 10H5a4 4 0 0 1 0-8h6" fill="none" stroke="#3c6a7a" stroke-width="1.3"/><rect x="12" y="8" width="1.6" height="6" fill="#555"/><circle cx="12.8" cy="14" r="2.2" fill="#e05a3c"/></svg>
<svg class="a" style="left:5px;top:440px;" width="17" height="17" viewBox="0 0 17 17"><path d="M1 8l6-5 6 5-6 5z" fill="#4f86c0"/><path d="M7 3l6 5-6 5z" fill="#2f5f96"/><rect x="12" y="8" width="1.6" height="6" fill="#555"/><circle cx="12.8" cy="14" r="2.2" fill="#e05a3c"/></svg>
<svg class="a" style="left:5px;top:462px;" width="17" height="17" viewBox="0 0 17 17"><circle cx="7" cy="8" r="6" fill="#3d76b9"/><circle cx="5.5" cy="6" r="2.5" fill="#7aaee0"/><rect x="12" y="8" width="1.6" height="6" fill="#555"/><circle cx="12.8" cy="14" r="2.2" fill="#e05a3c"/></svg>
<svg class="a" style="left:5px;top:484px;" width="17" height="17" viewBox="0 0 17 17"><rect x="2" y="3" width="10" height="11" fill="#3d76b9"/><ellipse cx="7" cy="3" rx="5" ry="2" fill="#7aaee0"/><rect x="12" y="8" width="1.6" height="6" fill="#555"/><circle cx="12.8" cy="14" r="2.2" fill="#e05a3c"/></svg>
<svg class="a" style="left:5px;top:506px;" width="17" height="17" viewBox="0 0 17 17"><path d="M7 2l6 11H1z" fill="#3d76b9"/><path d="M7 2l6 11H7z" fill="#2f5f96"/><rect x="12" y="8" width="1.6" height="6" fill="#555"/><circle cx="12.8" cy="14" r="2.2" fill="#e05a3c"/></svg>
<svg class="a" style="left:5px;top:528px;" width="17" height="17" viewBox="0 0 17 17"><path d="M1 5h13a6.5 5 0 0 1 -13 0z" fill="#3d76b9"/><ellipse cx="7.5" cy="5" rx="6.5" ry="1.8" fill="#2f5f96"/><rect x="12" y="8" width="1.6" height="6" fill="#555"/><circle cx="12.8" cy="14" r="2.2" fill="#e05a3c"/></svg>
<svg class="a" style="left:5px;top:550px;" width="17" height="17" viewBox="0 0 17 17"><circle cx="7" cy="8" r="6" fill="none" stroke="#3d76b9" stroke-width="2.6"/><rect x="12" y="8" width="1.6" height="6" fill="#555"/><circle cx="12.8" cy="14" r="2.2" fill="#e05a3c"/></svg>
<svg class="a" style="left:5px;top:572px;" width="17" height="17" viewBox="0 0 17 17"><path d="M1 8l6-6 7 6-7 6z" fill="#e8b040"/><path d="M4 8l3-3 4 3-4 3z" fill="#40a0c0"/><path d="M7 2l3 3-3 3z" fill="#e05a3c"/><rect x="12" y="8" width="1.6" height="6" fill="#555"/><circle cx="12.8" cy="14" r="2.2" fill="#e05a3c"/></svg>
<div class="a" style="left:4px;top:596px;width:19px;height:1px;background:#c8ccd4;"></div>
<svg class="a" style="left:5px;top:600px;" width="17" height="17" viewBox="0 0 17 17"><rect x="1" y="10" width="15" height="3" fill="#c8965a"/><path d="M2 10v2M4 10v2M6 10v2M8 10v2M10 10v2M12 10v2M14 10v2" stroke="#222" stroke-width="0.6"/><path d="M1 6h4M3 4v4M12 6h4M14 4v4" stroke="#e05a3c" stroke-width="1"/></svg>
<svg class="a" style="left:5px;top:622px;" width="17" height="17" viewBox="0 0 17 17"><path d="M1 14h15M1 14L14 4" fill="none" stroke="#3c8a7c" stroke-width="1.1"/></svg>
<svg class="a" style="left:5px;top:644px;" width="17" height="17" viewBox="0 0 17 17"><path d="M5 4L1 8l4 4M12 4l4 4-4 4" fill="none" stroke="#3c8a7c" stroke-width="1.6"/><path d="M6 8h5" stroke="#3c8a7c" stroke-dasharray="1 1"/></svg>
<div class="a" style="left:4px;top:667px;width:19px;height:1px;background:#c8ccd4;"></div>
<svg class="a" style="left:5px;top:673px;" width="17" height="17" viewBox="0 0 17 17"><path d="M1 14l5-3M10 6l5-3M12 1l3 3" fill="none" stroke="#3c8a7c" stroke-width="1.3"/><path d="M6 9h4M8 7v4" stroke="#e05a3c" stroke-width="1.1"/></svg>
<svg class="a" style="left:5px;top:695px;" width="17" height="17" viewBox="0 0 17 17"><path d="M2 15L15 2" stroke="#e05a3c" stroke-width="1.4"/><path d="M2 4l13 8" stroke="#3c8a7c" stroke-width="1.3"/><path d="M1 9h4M3 7v4" stroke="#e05a3c"/></svg>
<svg class="a" style="left:5px;top:717px;" width="17" height="17" viewBox="0 0 17 17"><path d="M2 15l3-4M10 5l5-3M11 8l4-1" fill="none" stroke="#3c8a7c" stroke-width="1.3"/><path d="M5 9h4M7 7v4" stroke="#e05a3c" stroke-width="1.1"/></svg>
<svg class="a" style="left:5px;top:740px;" width="17" height="17" viewBox="0 0 17 17"><path d="M2 15h13l-2-7c-1-3-8-3-9 0z" fill="#3c8a7c"/><circle cx="8.5" cy="11" r="2" fill="#fff"/><circle cx="8.5" cy="11" r="1" fill="#e05a3c"/><path d="M8.5 1v3" stroke="#333"/></svg>
<svg class="a" style="left:5px;top:762px;" width="17" height="17" viewBox="0 0 17 17"><path d="M1 15h15l-2-8H3z" fill="#3c8a7c"/><path d="M8.5 1v10" stroke="#333"/><circle cx="8.5" cy="12" r="1.6" fill="#fff"/><circle cx="8.5" cy="12" r="0.9" fill="#e05a3c"/></svg>
<div class="a" style="left:4px;top:784px;width:19px;height:1px;background:#c8ccd4;"></div>
<svg class="a" style="left:5px;top:788px;" width="17" height="17" viewBox="0 0 17 17"><g stroke="#333" stroke-width="0.9"><path d="M1 4h4M3 2v4M11 4h4M13 2v4M1 14h4M3 12v4M11 14h4M13 12v4"/></g><path d="M6 9h4M8 7v4" stroke="#e05a3c" stroke-width="1.1"/></svg>
<svg class="a" style="left:5px;top:810px;" width="17" height="17" viewBox="0 0 17 17"><circle cx="8" cy="8.5" r="5" fill="none" stroke="#3c8a7c" stroke-width="1.1"/><path d="M8 1.5v14M1 8.5h14" stroke="#3c8a7c" stroke-width="1.1"/></svg>
<svg class="a" style="left:5px;top:832px;" width="17" height="17" viewBox="0 0 17 17"><path d="M1 15L15 2" stroke="#3c8a7c" stroke-width="1.3"/></svg>
<svg class="a" style="left:5px;top:854px;" width="17" height="17" viewBox="0 0 17 17"><circle cx="8" cy="8.5" r="6.5" fill="none" stroke="#3c8a7c" stroke-width="1.1"/></svg>
<svg class="a" style="left:5px;top:876px;" width="17" height="17" viewBox="0 0 17 17"><path d="M1 8.5l7-5 8 5-8 5z" fill="#3c8a7c"/></svg>
<svg class="a" style="left:5px;top:898px;" width="17" height="17" viewBox="0 0 17 17"><circle cx="8" cy="8.5" r="6.8" fill="#3c8a7c"/><circle cx="6" cy="6.5" r="2.5" fill="#7abfae" opacity="0.6"/></svg>
<svg class="a" style="left:5px;top:920px;" width="17" height="17" viewBox="0 0 17 17"><rect x="2.5" y="2" width="11" height="13" rx="1" fill="#3c8a7c"/><ellipse cx="8" cy="2.5" rx="5.5" ry="1.6" fill="#7abfae"/></svg>
<svg class="a" style="left:5px;top:942px;" width="17" height="17" viewBox="0 0 17 17"><path d="M8 1l7 14H1z" fill="#3c8a7c"/></svg>
<svg class="a" style="left:5px;top:964px;" width="17" height="17" viewBox="0 0 17 17"><rect x="1" y="5" width="15" height="7" rx="3.5" fill="none" stroke="#3c8a7c" stroke-width="1.1"/></svg>
<svg class="a" style="left:14px;top:6px;" width="14" height="16" viewBox="0 0 14 16"><path d="M1.5 1.5h7l3.5 3.5v9.5h-10.5z M8.5 1.5v3.5h3.5" fill="#fff" stroke="#3d76b9" stroke-width="1"/></svg>
<svg class="a" style="left:37px;top:6px;" width="16" height="16" viewBox="0 0 16 16"><rect x="1" y="1.5" width="13" height="13" rx="1" fill="#3d76b9"/><rect x="3" y="1.5" width="9" height="5" fill="#fff"/><rect x="3" y="1.5" width="9" height="1.2" fill="#e05a3c"/><rect x="5" y="10" width="5" height="4.5" fill="#fff"/><rect x="6.5" y="11" width="2" height="3" fill="#3d76b9"/></svg>
<svg class="a" style="left:60px;top:5px;" width="24" height="17" viewBox="0 0 24 17"><path d="M1 6h5l1 1.5h6v8H1z" fill="#c49a4f"/><path d="M1 15.5l3-6h11l-2.5 6z" fill="#e8c383"/><path d="M8 5c1-3 4-4 7-2" fill="none" stroke="#4a9a73" stroke-width="1.6"/><path d="M14 1l2.5 2.5-3 1z" fill="#4a9a73"/></svg>
<svg class="a" style="left:81px;top:10px;" width="9" height="6" viewBox="0 0 9 6"><path d="M1 1l3.5 3.5L8 1" fill="none" stroke="#666" stroke-width="1"/></svg>
<svg class="a" style="left:95px;top:6px;" width="18" height="16" viewBox="0 0 18 16"><rect x="4" y="1" width="10" height="6" fill="#fff" stroke="#3d76b9" stroke-width="1"/><rect x="1" y="6" width="16" height="7" rx="1.5" fill="#6d6d6d"/><rect x="3" y="8" width="12" height="1.2" fill="#aaa"/><rect x="3.5" y="11" width="11" height="4" fill="#fff" stroke="#444" stroke-width="1"/></svg>
<svg class="a" style="left:119px;top:6px;" width="18" height="16" viewBox="0 0 18 16"><rect x="1" y="1.5" width="13" height="13" rx="1" fill="#3d76b9"/><rect x="3" y="1.5" width="9" height="5" fill="#fff"/><rect x="3" y="1.5" width="9" height="1.2" fill="#e05a3c"/><rect x="5" y="10" width="5" height="4.5" fill="#fff"/><path d="M7 15l2-4 7-8 1.5 1.5-7 8z" fill="#f0b030" stroke="#7a5a10" stroke-width="0.6"/></svg>
<svg class="a" style="left:144px;top:6px;" width="16" height="16" viewBox="0 0 16 16"><path d="M1 1h5l1 1.5h8V13H1z" fill="#d9b878"/><rect x="1" y="3" width="14" height="2" fill="#c7a260"/><rect x="4" y="3" width="2" height="13" fill="#fff" stroke="#555" stroke-width="0.6"/><path d="M4 6h2M4 8h2M4 10h2" stroke="#555" stroke-width="0.7"/></svg>
<div class="a" style="left:167px;top:3px;width:1px;height:21px;background:#d0d0d0;"></div>
<svg class="a" style="left:175px;top:7px;" width="16" height="15" viewBox="0 0 16 15"><path d="M4 5.5c4-3 9-1 9 4s-4 5-6 5" fill="none" stroke="#3d76b9" stroke-width="1.8"/><path d="M1 5l5-3.5 0.5 6z" fill="#3d76b9"/></svg>
<svg class="a" style="left:198px;top:7px;" width="16" height="15" viewBox="0 0 16 15"><path d="M12 5.5c-4-3-9-1-9 4s4 5 6 5" fill="none" stroke="#a9c7e6" stroke-width="1.8"/><path d="M15 5l-5-3.5-0.5 6z" fill="#a9c7e6"/></svg>
<svg class="a" style="left:222px;top:6px;" width="16" height="16" viewBox="0 0 16 16"><rect x="1" y="1" width="14" height="14" fill="#fff" stroke="#3d76b9" stroke-width="1.2"/><rect x="1" y="1" width="14" height="1.8" fill="#3d76b9"/><path d="M3.5 5.5h4M3.5 8.5h5M3.5 11.5h4" stroke="#3d76b9" stroke-width="1"/><path d="M10 5l1 1 2-2M10 11l1 1 2-2" fill="none" stroke="#4a9a73" stroke-width="1"/></svg>
<svg class="a" style="left:246px;top:9px;" width="8" height="9" viewBox="0 0 8 9"><path d="M1 1h6M1 4h6l-3 3z" fill="#666" stroke="#666" stroke-width="0.8"/></svg>
<svg class="a" style="left:1835px;top:38px;" width="16" height="16" viewBox="0 0 16 16"><path d="M1.5 1.5h13v9h-7l-3 3v-3h-3z" fill="#fff" stroke="#3d76b9" stroke-width="1.2"/><path d="M4 4.5h8M4 7h8" stroke="#3d76b9" stroke-width="1"/></svg>
<svg class="a" style="left:1858px;top:37px;" width="18" height="18" viewBox="0 0 18 18"><circle cx="9" cy="9" r="7.8" fill="#3d76b9" stroke="#2a5a92" stroke-width="1"/><circle cx="9" cy="9" r="6.3" fill="none" stroke="#fff" stroke-width="0.8"/><rect x="8" y="7.5" width="2.2" height="6" fill="#fff"/><circle cx="9.1" cy="5" r="1.3" fill="#fff"/></svg>
<svg class="a" style="left:1882px;top:37px;" width="18" height="18" viewBox="0 0 18 18"><circle cx="9" cy="9" r="7.8" fill="#3d76b9" stroke="#2a5a92" stroke-width="1"/><circle cx="9" cy="9" r="6.3" fill="none" stroke="#fff" stroke-width="0.8"/><path d="M6.5 7c0-2 1.2-3 2.6-3s2.6 1 2.6 2.4c0 1.8-2.4 2-2.4 3.8" fill="none" stroke="#fff" stroke-width="1.6"/><circle cx="9.2" cy="12.8" r="1" fill="#fff"/></svg>
<svg class="a" style="left:1905px;top:41px;" width="11" height="7" viewBox="0 0 11 7"><path d="M1.5 5.5l4-4 4 4" fill="none" stroke="#444" stroke-width="1.1"/></svg>
<svg class="a" style="left:13px;top:67px;" width="32" height="34" viewBox="0 0 32 34"><rect x="1" y="5" width="20" height="24" rx="1.5" fill="#b48a4c"/><rect x="6" y="2" width="10" height="6" rx="1.5" fill="#6b6b6b"/><rect x="8.5" y="0.5" width="5" height="3" rx="1" fill="#fff" stroke="#6b6b6b"/><path d="M12.5 12.5h10l6 6v14h-16z" fill="#fff" stroke="#3d76b9" stroke-width="1"/><path d="M22.5 12.5v6h6" fill="none" stroke="#3d76b9" stroke-width="1"/></svg>
<svg class="a" style="left:53px;top:68px;" width="16" height="16" viewBox="0 0 16 16"><circle cx="4" cy="12" r="2.3" fill="none" stroke="#4a9a95" stroke-width="1"/><circle cx="12" cy="11" r="2.3" fill="none" stroke="#4a9a95" stroke-width="1"/><path d="M5.5 10.5L12 1M10 9L3 2" stroke="#888" stroke-width="1"/></svg>
<svg class="a" style="left:53px;top:90px;" width="16" height="16" viewBox="0 0 16 16"><path d="M1.5 1.5h6l2 2v7h-8z" fill="#fff" stroke="#3d76b9"/><path d="M6.5 5.5h6l2 2v7.5h-8z" fill="#fff" stroke="#3d76b9"/></svg>
<svg class="a" style="left:53px;top:112px;" width="16" height="14" viewBox="0 0 16 14"><rect x="1" y="3" width="14" height="10" rx="1" fill="#666"/><rect x="3" y="1" width="4" height="3" fill="#666"/><circle cx="8" cy="8" r="3.3" fill="#fff"/><circle cx="8" cy="8" r="2.3" fill="#3d76b9"/></svg>
<svg class="a" style="left:153px;top:79px;" width="14" height="13" viewBox="0 0 14 13"><path d="M2 11L7 6M4 3l4 5M7 2.5v8M2.5 6.5h9" stroke="#000" stroke-width="1"/></svg>
<svg class="a" style="left:172px;top:82px;" width="9" height="5" viewBox="0 0 9 5"><path d="M1 0.5h6l-3 3.5z" fill="#777"/></svg>
<svg class="a" style="left:228px;top:82px;" width="9" height="5" viewBox="0 0 9 5"><path d="M1 0.5h6l-3 3.5z" fill="#777"/></svg>
<svg class="a" style="left:284px;top:82px;" width="9" height="5" viewBox="0 0 9 5"><path d="M1 0.5h6l-3 3.5z" fill="#777"/></svg>
<div class="a" style="left:185px;top:82px;width:37px;height:2px;background:#000;"></div>
<div class="a" style="left:242px;top:82px;width:37px;height:3px;background:#000;"></div>
<svg class="a" style="left:152px;top:106px;" width="16" height="18" viewBox="0 0 16 18"><rect x="2.5" y="0.5" width="6" height="6" fill="#fff" stroke="#444"/><rect x="5.5" y="3.5" width="6" height="6" fill="#fff" stroke="#444"/><rect x="0" y="13" width="16" height="4" fill="#c8f4fa"/></svg>
<svg class="a" style="left:185px;top:106px;" width="16" height="18" viewBox="0 0 16 18"><path d="M3 3l5-2 5 2v6l-5 2-5-2z" fill="#a8a8a8"/><path d="M3 3l5 2 5-2-5-2z" fill="#d0d0d0"/><path d="M8 5v6l5-2V3z" fill="#8a8a8a"/><rect x="0" y="13" width="16" height="4" fill="#7f7f7f"/></svg>
<svg class="a" style="left:220px;top:106px;" width="16" height="18" viewBox="0 0 16 18"><path d="M3 3l10-2v8l-10 2z" fill="#9a9a9a" stroke="#555" stroke-width="0.8"/><path d="M8 2v8M3 7l10-2" stroke="#ddd" stroke-width="0.8"/><rect x="0" y="13" width="16" height="4" fill="#7f7f7f"/></svg>
<svg class="a" style="left:255px;top:106px;" width="16" height="18" viewBox="0 0 16 18"><path d="M4 10.5h7V2.5z" fill="none" stroke="#888" stroke-width="0.9"/><rect x="0" y="13" width="16" height="4" fill="#c8f4fa"/></svg>
<svg class="a" style="left:289px;top:106px;" width="18" height="18" viewBox="0 0 18 18"><defs><radialGradient id="sph1" cx="0.4" cy="0.35" r="0.7"><stop offset="0" stop-color="#d8d8d8"/><stop offset="0.6" stop-color="#6a6a6a"/><stop offset="1" stop-color="#222"/></radialGradient></defs><circle cx="9" cy="9" r="8" fill="url(#sph1)"/><rect x="7" y="6" width="4" height="6" fill="none" stroke="#eee" stroke-width="0.8"/></svg>
<svg class="a" style="left:173px;top:112px;" width="9" height="6" viewBox="0 0 9 6"><path d="M1 1l3.5 3.5L8 1" fill="none" stroke="#666" stroke-width="1"/></svg>
<svg class="a" style="left:208px;top:112px;" width="9" height="6" viewBox="0 0 9 6"><path d="M1 1l3.5 3.5L8 1" fill="none" stroke="#666" stroke-width="1"/></svg>
<svg class="a" style="left:243px;top:112px;" width="9" height="6" viewBox="0 0 9 6"><path d="M1 1l3.5 3.5L8 1" fill="none" stroke="#666" stroke-width="1"/></svg>
<svg class="a" style="left:277px;top:112px;" width="9" height="6" viewBox="0 0 9 6"><path d="M1 1l3.5 3.5L8 1" fill="none" stroke="#666" stroke-width="1"/></svg>
<svg class="a" style="left:311px;top:112px;" width="9" height="6" viewBox="0 0 9 6"><path d="M1 1l3.5 3.5L8 1" fill="none" stroke="#666" stroke-width="1"/></svg>
<svg class="a" style="left:325px;top:106px;" width="17" height="17" viewBox="0 0 17 17"><rect x="1" y="1" width="3" height="3" fill="#e05a3c"/><rect x="1" y="6.5" width="3" height="3" fill="#3d76b9"/><rect x="1" y="12" width="3" height="3" fill="#b48a4c"/><path d="M5 8h5" stroke="#3d76b9" stroke-width="1.6"/><path d="M9 5.5l3 2.5-3 2.5z" fill="#3d76b9"/><rect x="13" y="1.5" width="2.5" height="2.5" fill="none" stroke="#666" stroke-width="0.8"/><rect x="13" y="7" width="2.5" height="2.5" fill="none" stroke="#666" stroke-width="0.8"/><rect x="13" y="12.5" width="2.5" height="2.5" fill="none" stroke="#666" stroke-width="0.8"/></svg>
<svg class="a" style="left:349px;top:106px;" width="17" height="17" viewBox="0 0 17 17"><path d="M1.5 6V1.5h4" fill="none" stroke="#b48a4c" stroke-width="1.1"/><path d="M15.5 10v5.5h-5" fill="none" stroke="#4a9a73" stroke-width="1.1"/><path d="M4 4l7 7" stroke="#3d76b9" stroke-width="2"/><path d="M12.5 7.5v5h-5z" fill="#3d76b9"/></svg>
<svg class="a" style="left:374px;top:106px;" width="17" height="17" viewBox="0 0 17 17"><path d="M1 2.5h15" stroke="#888" stroke-width="0.8"/><path d="M2 2.5l2-1.5 2 1.5-2 1.5z M7 2.5l2-1.5 2 1.5-2 1.5z M12 2.5l2-1.5 2 1.5-2 1.5z" fill="#3d76b9"/><path d="M2 2.5l2-1.5 2 1.5-2 1.5z" fill="#b48a4c"/><path d="M1 6.5h15" stroke="#3d76b9" stroke-width="1"/><path d="M1 8.5h15" stroke="#4a9a73" stroke-width="1.6"/><path d="M1 11h15" stroke="#444" stroke-width="0.9" stroke-dasharray="2 1"/><path d="M2 14.5h3M3.5 13v3M7 14.5h3M8.5 13v3M12 14.5h3M13.5 13v3" stroke="#3d76b9" stroke-width="0.9"/><path d="M7 14.5h3M8.5 13v3" stroke="#e05a3c" stroke-width="0.9"/></svg>
<svg class="a" style="left:408px;top:106px;" width="18" height="17" viewBox="0 0 18 17"><path d="M1 7l7-3 7 3-7 3z" fill="#bbb"/><path d="M1 10l7-3 7 3-7 3z" fill="#999"/><path d="M1 4l7-3 7 3-7 3z" fill="#3d76b9"/><path d="M14 8v6M12 12l2 2.5 2-2.5" fill="none" stroke="#4a9a73" stroke-width="1.3"/></svg>
<svg class="a" style="left:523px;top:71px;" width="26" height="26" viewBox="0 0 26 26"><path d="M2 2l22 22M24 2L2 24" stroke="#e05a3c" stroke-width="4.2"/></svg>
<svg class="a" style="left:560px;top:67px;" width="18" height="18" viewBox="0 0 18 18"><path d="M1.5 1.5l7 7M8.5 1.5l-7 7" stroke="#e05a3c" stroke-width="1.8"/><path d="M9 9a3 3 0 1 1 3 4M14 10a2.5 2.5 0 1 1 -3 4" fill="none" stroke="#666" stroke-width="1"/></svg>
<svg class="a" style="left:563px;top:89px;" width="12" height="18" viewBox="0 0 12 18"><path d="M1 1l8 7M9 1L1 8M1 9l8 7M9 9l-8 7" stroke="#e05a3c" stroke-width="1.7"/></svg>
<svg class="a" style="left:560px;top:111px;" width="18" height="18" viewBox="0 0 18 18"><path d="M1.5 1.5l8 8M9.5 1.5l-8 8" stroke="#e05a3c" stroke-width="1.8"/><path d="M6 16c1-3 4-4 8-3" fill="none" stroke="#3d76b9" stroke-width="1.8"/><path d="M4 14l3.5-2 0.5 4z" fill="#3d76b9"/></svg>
<svg class="a" style="left:637px;top:95px;" width="9" height="6" viewBox="0 0 9 6"><path d="M1 1l3.5 3.5L8 1" fill="none" stroke="#555" stroke-width="1"/></svg>
<svg class="a" style="left:698px;top:68px;" width="28" height="31" viewBox="0 0 28 31"><rect x="1" y="1.5" width="11" height="11" fill="none" stroke="#b48a4c" stroke-width="2"/><rect x="16" y="1.5" width="11" height="11" fill="none" stroke="#4a9a73" stroke-width="2"/><rect x="1" y="17.5" width="11" height="11" fill="none" stroke="#3d76b9" stroke-width="2"/><rect x="16" y="17.5" width="11" height="11" fill="none" stroke="#c8c8c8" stroke-width="2"/></svg>
<svg class="a" style="left:707px;top:118px;" width="9" height="6" viewBox="0 0 9 6"><path d="M1 1l3.5 3.5L8 1" fill="none" stroke="#555" stroke-width="1"/></svg>
<svg class="a" style="left:750px;top:67px;" width="18" height="18" viewBox="0 0 18 18"><circle cx="9" cy="9" r="6.8" fill="none" stroke="#3d76b9" stroke-width="1.1"/><path d="M9 5v8M5 9h8" stroke="#444" stroke-width="1.1"/><path d="M1 17L17 1" stroke="#444" stroke-width="1.1"/></svg>
<svg class="a" style="left:752px;top:90px;" width="14" height="15" viewBox="0 0 14 15"><rect x="2" y="2" width="10" height="11" fill="none" stroke="#3d76b9" stroke-width="1" stroke-dasharray="2 2"/><rect x="0.5" y="0.5" width="3" height="3" fill="#3d76b9"/><rect x="10.5" y="11.5" width="3" height="3" fill="#3d76b9"/></svg>
<svg class="a" style="left:751px;top:110px;" width="16" height="18" viewBox="0 0 16 18"><rect x="1.5" y="1.5" width="13" height="15" fill="none" stroke="#b48a4c" stroke-width="1" stroke-dasharray="1 1.5"/><rect x="4.5" y="4.5" width="7" height="9" fill="none" stroke="#b48a4c" stroke-width="1" stroke-dasharray="1 1.5"/></svg>
<svg class="a" style="left:801px;top:117px;" width="9" height="6" viewBox="0 0 9 6"><path d="M1 1l3.5 3.5L8 1" fill="none" stroke="#555" stroke-width="1"/></svg>
<svg class="a" style="left:877px;top:66px;" width="34" height="34" viewBox="0 0 34 34"><path d="M3 15l13 14" stroke="#3c9a7c" stroke-width="1.6"/><text x="18" y="14" font-family="Liberation Sans" font-weight="bold" font-size="19" fill="#2c5a8c">?</text></svg>
<svg class="a" style="left:926px;top:66px;" width="34" height="34" viewBox="0 0 34 34"><path d="M2 10l6-6 18 18-6 6z" fill="#b48a4c" stroke="#6b4a1a" stroke-width="0.8"/><path d="M7 7l1.5 1.5M10 10l1.5 1.5M13 13l1.5 1.5M16 16l1.5 1.5M19 19l1.5 1.5" stroke="#444" stroke-width="0.8"/><text x="20" y="14" font-family="Liberation Sans" font-weight="bold" font-size="19" fill="#2c5a8c">?</text></svg>
<svg class="a" style="left:980px;top:66px;" width="36" height="34" viewBox="0 0 36 34"><path d="M2 12c5-4 9 4 14 0s8-3 10-1M2 19c5-4 9 4 14 0s8-3 10-1M2 26c5-4 9 4 14 0s8-3 10-1" fill="none" stroke="#3d76b9" stroke-width="1.6"/><text x="20" y="13" font-family="Liberation Sans" font-weight="bold" font-size="19" fill="#2c5a8c">?</text></svg>
<svg class="a" style="left:1036px;top:66px;" width="36" height="34" viewBox="0 0 36 34"><path d="M2 18l10-8 12 6-10 10z" fill="#e8c383" stroke="#999" stroke-width="0.8"/><path d="M8 24l12-8 6 4-10 10z" fill="#ddd" stroke="#999" stroke-width="0.8"/><path d="M5 16l10-7M9 20l11-7" stroke="#3d76b9" stroke-width="1.3"/><text x="23" y="14" font-family="Liberation Sans" font-weight="bold" font-size="19" fill="#2c5a8c">?</text></svg>
<svg class="a" style="left:962px;top:119px;" width="9" height="6" viewBox="0 0 9 6"><path d="M1 1l3.5 3.5L8 1" fill="none" stroke="#555" stroke-width="1"/></svg>
<svg class="a" style="left:1076px;top:119px;" width="9" height="6" viewBox="0 0 9 6"><path d="M1 1l3.5 3.5L8 1" fill="none" stroke="#555" stroke-width="1"/></svg>
<svg class="a" style="left:1309px;top:119px;" width="9" height="6" viewBox="0 0 9 6"><path d="M1 1l3.5 3.5L8 1" fill="none" stroke="#555" stroke-width="1"/></svg>
<svg class="a" style="left:1089px;top:67px;" width="18" height="18" viewBox="0 0 18 18"><path d="M2 2l4 10 2-4 4 6" fill="none" stroke="#444" stroke-width="1"/><circle cx="12" cy="14" r="1.5" fill="#444"/><text x="8" y="10" font-family="Liberation Sans" font-weight="bold" font-size="12" fill="#2c5a8c">?</text></svg>
<svg class="a" style="left:1089px;top:89px;" width="18" height="18" viewBox="0 0 18 18"><path d="M1 15h13M1 15l8-9" fill="none" stroke="#666" stroke-width="1"/><path d="M5 15a5 5 0 0 0 -1-4" fill="none" stroke="#666" stroke-width="0.8"/><text x="8" y="9" font-family="Liberation Sans" font-weight="bold" font-size="12" fill="#2c5a8c">?</text></svg>
<svg class="a" style="left:1089px;top:111px;" width="18" height="18" viewBox="0 0 18 18"><path d="M3 14l4-4M7 10a2 2 0 1 1 3 -3M2 12a2 2 0 1 0 3 3" fill="none" stroke="#666" stroke-width="1.2"/><text x="8" y="10" font-family="Liberation Sans" font-weight="bold" font-size="12" fill="#2c5a8c">?</text></svg>
<svg class="a" style="left:1154px;top:73px;" width="9" height="6" viewBox="0 0 9 6"><path d="M1 1l3.5 3.5L8 1" fill="none" stroke="#555" stroke-width="1"/></svg>
<svg class="a" style="left:1142px;top:95px;" width="9" height="6" viewBox="0 0 9 6"><path d="M1 1l3.5 3.5L8 1" fill="none" stroke="#555" stroke-width="1"/></svg>
<svg class="a" style="left:1142px;top:117px;" width="9" height="6" viewBox="0 0 9 6"><path d="M1 1l3.5 3.5L8 1" fill="none" stroke="#555" stroke-width="1"/></svg>
<svg class="a" style="left:1250px;top:73px;" width="9" height="6" viewBox="0 0 9 6"><path d="M1 1l3.5 3.5L8 1" fill="none" stroke="#555" stroke-width="1"/></svg>
<svg class="a" style="left:1230px;top:95px;" width="9" height="6" viewBox="0 0 9 6"><path d="M1 1l3.5 3.5L8 1" fill="none" stroke="#555" stroke-width="1"/></svg>
<svg class="a" style="left:1167px;top:67px;" width="18" height="18" viewBox="0 0 18 18"><path d="M1 8l6-3 6 3v6l-6 3-6-3z" fill="#b48a4c"/><path d="M4 11l2 2 4-4" fill="none" stroke="#4a9a73" stroke-width="1.2"/><text x="9" y="10" font-family="Liberation Sans" font-weight="bold" font-size="12" fill="#2c5a8c">?</text></svg>
<svg class="a" style="left:1167px;top:89px;" width="18" height="18" viewBox="0 0 18 18"><rect x="1.5" y="7.5" width="8" height="8" fill="none" stroke="#444"/><path d="M5.5 9.5v4M3.5 11.5h4" stroke="#444"/><text x="9" y="10" font-family="Liberation Sans" font-weight="bold" font-size="12" fill="#2c5a8c">?</text></svg>
<svg class="a" style="left:1167px;top:111px;" width="17" height="17" viewBox="0 0 17 17"><rect x="1.5" y="1.5" width="14" height="13" fill="none" stroke="#3d76b9" stroke-width="1.1"/><path d="M11 4.5H5.5l3 3.5-3 3.5H11" fill="none" stroke="#333" stroke-width="1"/></svg>
<svg class="a" style="left:1279px;top:68px;" width="32" height="30" viewBox="0 0 32 30"><polygon points="29.00,8.00 28.85,9.56 26.32,10.20 25.79,11.20 26.66,13.66 25.44,14.65 23.20,13.32 22.12,13.65 21.00,16.00 19.44,15.85 18.80,13.32 17.80,12.79 15.34,13.66 14.35,12.44 15.68,10.20 15.35,9.12 13.00,8.00 13.15,6.44 15.68,5.80 16.21,4.80 15.34,2.34 16.56,1.35 18.80,2.68 19.88,2.35 21.00,0.00 22.56,0.15 23.20,2.68 24.20,3.21 26.66,2.34 27.65,3.56 26.32,5.80 26.65,6.88" fill="#3d76b9"/><circle cx="21" cy="8" r="2.80" fill="#fff"/><polygon points="19.00,20.00 18.83,21.76 15.99,22.48 15.39,23.60 16.36,26.36 15.00,27.48 12.48,25.99 11.26,26.36 10.00,29.00 8.24,28.83 7.52,25.99 6.40,25.39 3.64,26.36 2.52,25.00 4.01,22.48 3.64,21.26 1.00,20.00 1.17,18.24 4.01,17.52 4.61,16.40 3.64,13.64 5.00,12.52 7.52,14.01 8.74,13.64 10.00,11.00 11.76,11.17 12.48,14.01 13.60,14.61 16.36,13.64 17.48,15.00 15.99,17.52 16.36,18.74" fill="#6aa89a"/><circle cx="10" cy="20" r="3.15" fill="#fff"/></svg>
<svg class="a" style="left:1333px;top:69px;" width="31" height="30" viewBox="0 0 31 30"><path d="M3 3h22v22H6c-3 0-3-3-3-3z" fill="#fff" stroke="#555" stroke-width="1"/><path d="M25 3c2 0 3 1 3 2M3 22c0 2 1 3 3 3h22" fill="none" stroke="#555"/><text x="6" y="17" font-family="Liberation Sans" font-weight="bold" font-size="10" fill="#3c8a7c">C#</text></svg>
<svg class="a" style="left:1388px;top:68px;" width="34" height="32" viewBox="0 0 34 32"><circle cx="20" cy="12" r="8.5" fill="#fff" stroke="#444" stroke-width="2.5"/><path d="M14 18l-9 9" stroke="#111" stroke-width="3.5"/><path d="M1 5h8M1 10h5M1 15h6" stroke="#3d76b9" stroke-width="2"/></svg>
<div class="t" style="left:1447.70px;top:166.46px;font-size:18px;color:#333;transform:scaleX(1.0299);">Device Manager</div>
<svg class="a" style="left:1656px;top:168px;" width="12" height="14" viewBox="0 0 12 14"><path d="M3 1.5h6M4 1.5v6h4v-6M2.5 7.5h7M6 7.5v5" fill="none" stroke="#555" stroke-width="1.3"/></svg>
<svg class="a" style="left:1676px;top:170px;" width="11" height="11" viewBox="0 0 11 11"><path d="M1.5 1.5l8 8M9.5 1.5l-8 8" stroke="#555" stroke-width="1.2"/></svg>
<svg class="a" style="left:1452px;top:198px;" width="6" height="18" viewBox="0 0 6 18"><path d="M1.5 1v16M4.5 1v16" stroke="#999" stroke-width="1" stroke-dasharray="1 2"/></svg>
<svg class="a" style="left:1452px;top:223px;" width="6" height="18" viewBox="0 0 6 18"><path d="M1.5 1v16M4.5 1v16" stroke="#999" stroke-width="1" stroke-dasharray="1 2"/></svg>
<svg class="a" style="left:1466px;top:198px;" width="18" height="18" viewBox="0 0 18 18"><path d="M5 4c3-2 7 0 8 4l1 4c0 3-3 5-6 5s-5-2-6-5l-1-3c0-2 1-4 4-5z M6 7l6-2" fill="#fff" stroke="#222" stroke-width="1"/><path d="M7 3c0-2 2-2 3-1" fill="none" stroke="#222"/></svg>
<svg class="a" style="left:1489px;top:198px;" width="18" height="18" viewBox="0 0 18 18"><rect x="1.5" y="3.5" width="14" height="11" fill="#dde9f6" stroke="#3d76b9"/><text x="2.5" y="12.5" font-family="Liberation Sans" font-weight="bold" font-size="6.5" fill="#2a5a92">DRO</text><path d="M3 1l1 2M9 0.5v2M14 1l-1 2" stroke="#e0a020" stroke-width="1"/></svg>
<svg class="a" style="left:1511px;top:198px;" width="18" height="18" viewBox="0 0 18 18"><rect x="2" y="1.5" width="13" height="14" fill="#fff" stroke="#3d76b9" stroke-width="1.1"/><path d="M4.5 5h4M4.5 8.5h5M4.5 12h4" stroke="#3d76b9"/><path d="M10.5 4.5l1 1 2-2M10.5 11.5l1 1 2-2" fill="none" stroke="#4a9a73"/></svg>
<svg class="a" style="left:1532px;top:198px;" width="18" height="18" viewBox="0 0 18 18"><circle cx="9" cy="9" r="6" fill="none" stroke="#c8965a" stroke-width="3.2"/><path d="M9 1v3M9 14v3M1 9h3M14 9h3M3.3 3.3l2 2M12.7 12.7l2-2M3.3 14.7l2-2M14.7 3.3l-2 2" stroke="#c8965a" stroke-width="2.2"/><circle cx="9" cy="9" r="2" fill="#e05a3c"/></svg>
<svg class="a" style="left:1554px;top:198px;" width="18" height="18" viewBox="0 0 18 18"><path d="M4 16V5h3l8-2v2l-8 2v9z" fill="#e05a3c"/><path d="M2 16.5h8" stroke="#222" stroke-width="1.5"/><path d="M13 5v6" stroke="#222" stroke-width="1.3"/></svg>
<div class="a" style="left:1577px;top:198px;width:1px;height:18px;background:#cfd5df;"></div>
<svg class="a" style="left:1583px;top:198px;" width="18" height="18" viewBox="0 0 18 18"><rect x="4" y="1" width="2.2" height="9" fill="#555"/><circle cx="5" cy="13" r="3.2" fill="#e05a3c"/><rect x="9" y="9" width="7" height="7" fill="#fff" stroke="#3d76b9"/><path d="M10.5 12.5l1.5 1.5 3-3" fill="none" stroke="#3d76b9"/></svg>
<svg class="a" style="left:1605px;top:198px;" width="18" height="18" viewBox="0 0 18 18"><rect x="1.5" y="3.5" width="15" height="11" fill="#eee" stroke="#555"/><path d="M5 3v12M9 3v12M13 3v12" stroke="#555"/><rect x="3.5" y="6" width="3" height="2" fill="#555"/><rect x="7.5" y="10" width="3" height="2" fill="#555"/><rect x="11.5" y="7" width="3" height="2" fill="#555"/></svg>
<svg class="a" style="left:1627px;top:198px;" width="18" height="18" viewBox="0 0 18 18"><rect x="3" y="1" width="2.2" height="14" fill="#e05a3c"/><circle cx="11.5" cy="12.5" r="3.5" fill="#c8965a" stroke="#e05a3c"/><circle cx="11.5" cy="12.5" r="1.2" fill="#fff"/></svg>
<svg class="a" style="left:1649px;top:198px;" width="18" height="18" viewBox="0 0 18 18"><path d="M1 7l8-4 8 4-8 4z" fill="#e05a3c"/><path d="M4 9v4c3 2 7 2 10 0V9" fill="#8a1a1a"/><path d="M3 1h3M4.5 0v3" stroke="#4a9a73" stroke-width="1.2"/></svg>
<svg class="a" style="left:1466px;top:223px;" width="18" height="18" viewBox="0 0 18 18"><path d="M1 8l7-6 7 6h-2v7H3V8z" fill="#c8965a"/><path d="M1 8l7-6 7 6" fill="none" stroke="#e05a3c" stroke-width="1.6"/><rect x="10" y="9" width="7" height="8" fill="#2a5a92"/><text x="11.3" y="16" font-family="Liberation Sans" font-weight="bold" font-size="7" fill="#fff">1</text></svg>
<svg class="a" style="left:1489px;top:223px;" width="18" height="18" viewBox="0 0 18 18"><circle cx="9" cy="9" r="8" fill="#e05a3c"/><circle cx="9" cy="9" r="5.5" fill="#555"/><circle cx="9" cy="9" r="3" fill="#111"/></svg>
<svg class="a" style="left:1511px;top:223px;" width="18" height="18" viewBox="0 0 18 18"><circle cx="9" cy="9" r="6.5" fill="#e05a3c"/><circle cx="9" cy="9" r="4.5" fill="#ddd"/><circle cx="9" cy="9" r="2.5" fill="#111"/></svg>
<svg class="a" style="left:1533px;top:223px;" width="18" height="18" viewBox="0 0 18 18"><rect x="4.5" y="4.5" width="9" height="9" rx="2" fill="#e05a3c"/><circle cx="9" cy="9" r="2.5" fill="#111"/></svg>
<svg class="a" style="left:1555px;top:223px;" width="18" height="18" viewBox="0 0 18 18"><rect x="3" y="1" width="2.2" height="10" fill="#555"/><circle cx="4" cy="13" r="3.3" fill="#e05a3c"/><rect x="8.5" y="6.5" width="8" height="10" fill="#fff" stroke="#3d76b9"/><path d="M10 9h5M10 11h5M10 13h5" stroke="#3d76b9" stroke-width="0.8"/></svg>
<svg class="a" style="left:1577px;top:223px;" width="18" height="18" viewBox="0 0 18 18"><circle cx="6" cy="6" r="4" fill="none" stroke="#8a1a1a" stroke-width="2"/><circle cx="12" cy="12" r="3.5" fill="none" stroke="#e05a3c" stroke-width="2"/><path d="M8 8l3 3" stroke="#444" stroke-width="1.3"/></svg>
<svg class="a" style="left:1599px;top:223px;" width="18" height="18" viewBox="0 0 18 18"><circle cx="9" cy="9" r="6" fill="none" stroke="#3d76b9" stroke-width="1.4"/><path d="M9 1v5M9 12v5M1 9h5M12 9h5" stroke="#3d76b9" stroke-width="1.3"/><circle cx="9" cy="9" r="2" fill="#e05a3c"/></svg>
<svg class="a" style="left:1621px;top:223px;" width="18" height="18" viewBox="0 0 18 18"><rect x="1" y="6" width="12" height="7" fill="#666"/><path d="M13 8l4-2v7l-4-2z" fill="#444"/><rect x="2" y="7" width="4" height="2" fill="#aaa"/></svg>
<svg class="a" style="left:1643px;top:223px;" width="18" height="18" viewBox="0 0 18 18"><rect x="3" y="1" width="2" height="15" fill="#e05a3c"/><rect x="7" y="3" width="2" height="10" fill="#555"/><circle cx="12.5" cy="12.5" r="3.5" fill="#c8965a" stroke="#e05a3c"/><path d="M10 4l4 4" stroke="#3d76b9" stroke-width="1.3"/></svg>
<svg class="a" style="left:1665px;top:223px;" width="18" height="18" viewBox="0 0 18 18"><path d="M4 16V4h3l8-2v2l-8 2v10z" fill="#e05a3c"/><path d="M2 16.5h6" stroke="#222" stroke-width="1.5"/><circle cx="13" cy="13" r="3.5" fill="#c8965a" stroke="#e05a3c"/></svg>
<div class="a" style="left:1446px;top:248px;width:243px;height:200px;background:#fff;border:1px solid #8c8c8c"></div>
<div class="t" style="left:1457.00px;top:266.01px;font-size:17px;color:#111;font-weight:bold;transform:scaleX(1.0777);">I++ CMM:Renishaw</div>
<svg class="a" style="left:1464px;top:291px;" width="48" height="48" viewBox="0 0 48 48"><rect width="48" height="48" fill="#c9c9c9"/>
      <path d="M-4 30 A26 22 0 0 1 48 18 L48 30 A22 16 0 0 0 6 36 Z" fill="#8a8a8a"/>
      <path d="M2 44 A24 14 0 0 1 46 40 L48 48 H0 Z" fill="#9a9a9a"/>
      <circle cx="41" cy="5" r="2.2" fill="#999"/><circle cx="6" cy="44" r="2.2" fill="#999"/><circle cx="41" cy="44" r="2" fill="#aaa"/>
      <rect x="10" y="0" width="5" height="8" fill="#a8a8a8"/><rect x="11.3" y="8" width="2.4" height="22" fill="#e8e8e8"/>
      <circle cx="12.5" cy="31.5" r="2.2" fill="#e01010"/>
      <text x="18" y="25" font-family="Liberation Serif" font-style="italic" font-weight="bold" font-size="21" fill="#2350c0">I</text>
      <text x="28" y="19" font-family="Liberation Sans" font-weight="bold" font-size="10" fill="#2350c0">++</text>
      <text x="13" y="40" font-family="Liberation Sans" font-size="9.5" fill="#111">CMM</text></svg>
<div class="a" style="left:1538px;top:299px;width:75px;height:32px;background:#fdfdfd;border:1px solid #c4c4c4;border-radius:3px"></div>
<div class="t" style="left:1559.50px;top:308.30px;font-size:15px;color:#111;font-weight:bold;transform:scaleX(0.9599);">Stop</div>
<svg class="a" style="left:1622px;top:303px;" width="26" height="26" viewBox="0 0 26 26"><defs><radialGradient id="led" cx="0.45" cy="0.35" r="0.65"><stop offset="0" stop-color="#c8ffc0"/><stop offset="0.35" stop-color="#3fd63a"/><stop offset="1" stop-color="#0a6a10"/></radialGradient></defs><rect width="26" height="26" fill="#f0f0f0"/><circle cx="13" cy="13" r="11" fill="url(#led)"/></svg>
<div class="t" style="left:1465.50px;top:359.15px;font-size:14px;color:#111;font-weight:bold;transform:scaleX(0.9514);">Probe Radius :</div>
<div class="t" style="left:1570.50px;top:359.15px;font-size:14px;color:#111;font-weight:bold;transform:scaleX(1.0210);">0.0784 IN</div>
<div class="t" style="left:1465.50px;top:389.15px;font-size:14px;color:#111;font-weight:bold;transform:scaleX(0.9691);">Device Temp :</div>
<div class="t" style="left:1465.50px;top:418.15px;font-size:14px;color:#111;font-weight:bold;transform:scaleX(1.0232);">Material Temp :</div>
<div class="a" style="left:1443px;top:451px;width:249px;height:290px;background:#fff;border:1px solid #a0a0a0;border-bottom:none"></div>
<div class="a" style="left:1443px;top:742px;width:249px;height:3px;background:#ebebeb;"></div>
<div class="a" style="left:1444px;top:452px;width:247px;height:22px;background:#f0f0f0;border-bottom:1px solid #d8d8d8"></div>
<div class="a" style="left:1444px;top:474px;width:246px;height:21px;background:#f3f3f3;border:1px dotted #555"></div>
<div class="a" style="left:1462px;top:452px;width:1px;height:42px;background:#d0d0d0;"></div>
<div class="a" style="left:1575px;top:452px;width:1px;height:42px;background:#d0d0d0;"></div>
<svg class="a" style="left:1446px;top:455px;" width="15" height="15" viewBox="0 0 15 15"><rect x="1.5" y="1.5" width="12" height="12" fill="#fff" stroke="#333"/><path d="M4 7.5l2.5 2.5 5-5.5" fill="none" stroke="#111" stroke-width="1.5"/></svg>
<svg class="a" style="left:1446px;top:477px;" width="15" height="15" viewBox="0 0 15 15"><rect x="1.5" y="1.5" width="12" height="12" fill="#fff" stroke="#3d76b9"/><path d="M4 7.5l2.5 2.5 5-5.5" fill="none" stroke="#2a4a82" stroke-width="1.5"/></svg>
<div class="t" style="left:1464.00px;top:457.17px;font-size:12.2px;color:#222;transform:scaleX(0.9383);">Device</div>
<div class="t" style="left:1579.00px;top:457.17px;font-size:12.2px;color:#222;transform:scaleX(0.9952);">Alignment</div>
<div class="t" style="left:1464.00px;top:478.17px;font-size:12.2px;color:#111;transform:scaleX(0.9797);">I++ CMM:Renishaw</div>
<div class="t" style="left:1578.00px;top:478.17px;font-size:12.2px;color:#111;transform:scaleX(0.9893);">Auto Align3 - Plan...</div>
<div class="a" style="left:1443px;top:748px;width:249px;height:19px;background:#fff;border:1px solid #ccd3dc;border-bottom:none"></div>
<div class="t" style="left:1448.00px;top:752.43px;font-size:11.3px;color:#333;transform:scaleX(1.0440);">Device 1 - I++ CMM:Renishaw</div>
<svg class="a" style="left:1613px;top:752px;" width="57" height="10" viewBox="0 0 57 10"><pattern id="dots" width="3" height="3" patternUnits="userSpaceOnUse"><rect width="1" height="1" fill="#aaa"/></pattern><rect width="57" height="10" fill="url(#dots)"/></svg>
<svg class="a" style="left:1672px;top:751px;" width="12" height="12" viewBox="0 0 12 12"><path d="M2 2l8 8M10 2l-8 8" stroke="#222" stroke-width="1.3"/></svg>
<div class="a" style="left:1443px;top:767px;width:249px;height:26px;background:#fff;"></div>
<div class="t" style="left:1454.00px;top:775.93px;font-size:11.3px;color:#333;transform:scaleX(0.9557);">FORMATS</div>
<div class="t" style="left:1526.50px;top:775.93px;font-size:11.3px;color:#333;transform:scaleX(0.9639);">CUSTOM</div>
<div class="t" style="left:1593.50px;top:775.93px;font-size:11.3px;color:#333;transform:scaleX(0.9005);">TEXT</div>
<div class="a" style="left:1443px;top:793px;width:249px;height:214px;background:#000;"></div>
<div class="t" style="left:1448.70px;top:797.97px;font-size:43.5px;color:#fff;font-weight:bold;transform:scaleX(0.9765);">X:</div>
<div class="t" style="left:1550.60px;top:797.97px;font-size:43.5px;color:#fff;font-weight:bold;transform:scaleX(1.0105);">2.0104</div>
<div class="t" style="left:1448.70px;top:850.87px;font-size:43.5px;color:#fff;font-weight:bold;transform:scaleX(1.0557);">Y:</div>
<div class="t" style="left:1550.60px;top:850.87px;font-size:43.5px;color:#fff;font-weight:bold;transform:scaleX(1.0105);">0.0000</div>
<div class="t" style="left:1448.70px;top:904.17px;font-size:43.5px;color:#fff;font-weight:bold;transform:scaleX(1.0333);">Z:</div>
<div class="t" style="left:1550.60px;top:904.17px;font-size:43.5px;color:#fff;font-weight:bold;transform:scaleX(1.0105);">1.4026</div>
<div class="t" style="left:1448.70px;top:956.47px;font-size:43.5px;color:#fff;font-weight:bold;transform:scaleX(0.9256);">D:</div>
<div class="t" style="left:1550.60px;top:956.47px;font-size:43.5px;color:#fff;font-weight:bold;transform:scaleX(1.0105);">2.4513</div>
<div class="t" style="left:1655.00px;top:988.80px;font-size:15px;color:#fff;font-weight:bold;transform:scaleX(0.9732);">inch</div>
<div class="t" style="left:1702.70px;top:166.46px;font-size:18px;color:#333;transform:scaleX(1.0292);">Auto Inspect</div>
<svg class="a" style="left:1884px;top:168px;" width="12" height="14" viewBox="0 0 12 14"><path d="M3 1.5h6M4 1.5v6h4v-6M2.5 7.5h7M6 7.5v5" fill="none" stroke="#555" stroke-width="1.3"/></svg>
<svg class="a" style="left:1904px;top:170px;" width="11" height="11" viewBox="0 0 11 11"><path d="M1.5 1.5l8 8M9.5 1.5l-8 8" stroke="#555" stroke-width="1.2"/></svg>
<div class="a" style="left:1706px;top:196px;width:119px;height:23px;background:#fdfdfd;border:1px solid #c8c8c8;border-radius:3px"></div>
<div class="t" style="left:1710.00px;top:200.57px;font-size:13.5px;color:#000;font-weight:bold;transform:scaleX(1.0150);">Main Inspect</div>
<svg class="a" style="left:1810px;top:203px;" width="11" height="8" viewBox="0 0 11 8"><path d="M1.5 1.5l4 4 4-4" fill="none" stroke="#555" stroke-width="1.1"/></svg>
<div class="a" style="left:1828px;top:197px;width:1px;height:20px;background:#d0d0d0;"></div>
<div class="a" style="left:1879px;top:197px;width:1px;height:20px;background:#d0d0d0;"></div>
<svg class="a" style="left:1835px;top:199px;" width="16" height="16" viewBox="0 0 16 16"><path d="M2.5 1.5l11 6.5-11 6.5z" fill="#3c9a7c"/></svg>
<svg class="a" style="left:1857px;top:199px;" width="16" height="16" viewBox="0 0 16 16"><rect x="2.5" y="2.5" width="11" height="11" fill="#e05a3c"/></svg>
<svg class="a" style="left:1884px;top:199px;" width="18" height="16" viewBox="0 0 18 16"><path d="M1.5 1.5l10 6.5-10 6.5z" fill="#3d76b9"/><rect x="13" y="1.5" width="3" height="13" fill="#3d76b9"/></svg>
<div class="a" style="left:1698px;top:222px;width:220px;height:691px;background:#fff;border-left:1px solid #a0a0a0;border-top:1px solid #a0a0a0;border-right:1px solid #a0a0a0"></div>
<div class="a" style="left:1699px;top:223px;width:220px;height:21px;background:#f0f0f0;border-bottom:1px solid #b8b8b8"></div>
<div class="a" style="left:1716.5px;top:223px;width:1px;height:21px;background:#c0c0c0;"></div>
<div class="a" style="left:1750px;top:223px;width:1px;height:21px;background:#c0c0c0;"></div>
<div class="a" style="left:1767.5px;top:223px;width:1px;height:21px;background:#c0c0c0;"></div>
<div class="a" style="left:1860.5px;top:223px;width:1px;height:21px;background:#c0c0c0;"></div>
<div class="t" style="left:1770.50px;top:227.67px;font-size:12.2px;color:#222;transform:scaleX(0.9833);">Name</div>
<div class="t" style="left:1896.00px;top:227.67px;font-size:12.2px;color:#222;transform:scaleX(0.9223);">Dev</div>
<div class="t" style="left:1770.30px;top:247.67px;font-size:12.2px;color:#111;transform:scaleX(0.8615);">TP20_4x40.1.20...</div>
<svg class="a" style="left:1750px;top:247px;" width="16" height="16" viewBox="0 0 16 16"><rect x="7" y="1" width="2" height="10" fill="#555"/><circle cx="8" cy="13" r="2.8" fill="#e05a3c"/></svg>
<div class="t" style="left:1770.30px;top:268.67px;font-size:12.2px;color:#111;transform:scaleX(0.9372);">Clear Device Al...</div>
<svg class="a" style="left:1750px;top:268px;" width="16" height="16" viewBox="0 0 16 16"><path d="M1 1.5l9 6.5-9 6.5z" fill="#3d76b9"/><rect x="12" y="1.5" width="3" height="13" fill="#3d76b9"/></svg>
<div class="t" style="left:1770.30px;top:289.67px;font-size:12.2px;color:#111;transform:scaleX(0.9646);">Add Device Ali...</div>
<svg class="a" style="left:1750px;top:289px;" width="16" height="16" viewBox="0 0 16 16"><path d="M1 1.5l9 6.5-9 6.5z" fill="#3d76b9"/><rect x="12" y="1.5" width="3" height="13" fill="#3d76b9"/></svg>
<div class="a" style="left:1699px;top:308px;width:220px;height:21px;background:#ccffff;"></div>
<div class="t" style="left:1729.11px;top:310.67px;font-size:12.2px;color:#111;">1</div>
<div class="t" style="left:1770.30px;top:310.67px;font-size:12.2px;color:#111;transform:scaleX(0.9785);">Top surf</div>
<svg class="a" style="left:1750px;top:310px;" width="16" height="16" viewBox="0 0 16 16"><defs><linearGradient id="dg" x1="0" y1="0" x2="1" y2="1"><stop offset="0" stop-color="#8ab4e0"/><stop offset="1" stop-color="#3a6aa8"/></linearGradient></defs><path d="M0.5 7l6-5.5 6 5.5-6 5.5z" fill="url(#dg)"/><rect x="12.2" y="7" width="1.6" height="6" fill="#555"/><circle cx="13" cy="13.5" r="2" fill="#e05a3c"/></svg>
<div class="a" style="left:1699px;top:329px;width:220px;height:21px;background:#00ee00;"></div>
<div class="t" style="left:1729.11px;top:331.67px;font-size:12.2px;color:#111;">2</div>
<div class="t" style="left:1770.30px;top:331.67px;font-size:12.2px;color:#111;transform:scaleX(0.9379);">Insode Bore</div>
<div class="t" style="left:1883.18px;top:331.67px;font-size:12.2px;color:#111;transform:scaleX(0.8600);">0.0011</div>
<svg class="a" style="left:1750px;top:331px;" width="16" height="16" viewBox="0 0 16 16"><circle cx="6.5" cy="7" r="5.8" fill="none" stroke="#203a60" stroke-width="1" stroke-dasharray="2.2 0.8"/><rect x="12.2" y="7" width="1.6" height="6" fill="#555"/><circle cx="13" cy="13.5" r="2" fill="#e05a3c"/></svg>
<div class="a" style="left:1699px;top:350px;width:220px;height:21px;background:#ccffff;"></div>
<div class="t" style="left:1729.11px;top:352.67px;font-size:12.2px;color:#111;">3</div>
<div class="t" style="left:1770.30px;top:352.67px;font-size:12.2px;color:#111;transform:scaleX(0.8951);">Surf1</div>
<svg class="a" style="left:1750px;top:352px;" width="16" height="16" viewBox="0 0 16 16"><defs><linearGradient id="dg" x1="0" y1="0" x2="1" y2="1"><stop offset="0" stop-color="#8ab4e0"/><stop offset="1" stop-color="#3a6aa8"/></linearGradient></defs><path d="M0.5 7l6-5.5 6 5.5-6 5.5z" fill="url(#dg)"/><rect x="12.2" y="7" width="1.6" height="6" fill="#555"/><circle cx="13" cy="13.5" r="2" fill="#e05a3c"/></svg>
<div class="t" style="left:1770.30px;top:373.67px;font-size:12.2px;color:#111;transform:scaleX(0.9378);">PlanFeatAlign1</div>
<svg class="a" style="left:1750px;top:373px;" width="16" height="16" viewBox="0 0 16 16"><path d="M7.5 2v8.5M7.5 10.5l-5.5 4.5M7.5 10.5l5.5 4.5" stroke="#333" stroke-width="1"/><path d="M6 3.5l1.5-2.5 1.5 2.5zM1 15.5l1.2-3 1.5 1.8zM14 15.5l-1.2-3-1.5 1.8z" fill="#333"/><ellipse cx="12.5" cy="5" rx="2.8" ry="1.8" fill="none" stroke="#e05a3c" stroke-width="1.1"/></svg>
<div class="a" style="left:1699px;top:392px;width:220px;height:21px;background:#00ee00;"></div>
<div class="t" style="left:1729.11px;top:394.67px;font-size:12.2px;color:#111;">4</div>
<div class="t" style="left:1770.30px;top:394.67px;font-size:12.2px;color:#111;transform:scaleX(0.8666);">Rad</div>
<div class="t" style="left:1882.42px;top:394.67px;font-size:12.2px;color:#111;transform:scaleX(0.8600);">0.0017</div>
<svg class="a" style="left:1750px;top:394px;" width="16" height="16" viewBox="0 0 16 16"><circle cx="6.5" cy="7" r="5.8" fill="none" stroke="#203a60" stroke-width="1" stroke-dasharray="2.2 0.8"/><rect x="12.2" y="7" width="1.6" height="6" fill="#555"/><circle cx="13" cy="13.5" r="2" fill="#e05a3c"/></svg>
<div class="a" style="left:1699px;top:413px;width:220px;height:21px;background:#00ee00;"></div>
<div class="t" style="left:1729.11px;top:415.67px;font-size:12.2px;color:#111;">5</div>
<div class="t" style="left:1770.30px;top:415.67px;font-size:12.2px;color:#111;transform:scaleX(0.9339);">Lower Leg Surf1</div>
<div class="t" style="left:1878.91px;top:415.67px;font-size:12.2px;color:#111;transform:scaleX(0.8600);">-0.0025</div>
<svg class="a" style="left:1750px;top:415px;" width="16" height="16" viewBox="0 0 16 16"><defs><linearGradient id="dg" x1="0" y1="0" x2="1" y2="1"><stop offset="0" stop-color="#8ab4e0"/><stop offset="1" stop-color="#3a6aa8"/></linearGradient></defs><path d="M0.5 7l6-5.5 6 5.5-6 5.5z" fill="url(#dg)"/><rect x="12.2" y="7" width="1.6" height="6" fill="#555"/><circle cx="13" cy="13.5" r="2" fill="#e05a3c"/></svg>
<div class="a" style="left:1699px;top:434px;width:220px;height:21px;background:#efefef;"></div>
<div class="t" style="left:1770.30px;top:436.67px;font-size:12.2px;color:#111;transform:scaleX(0.9238);">Lower Surface ...</div>
<div class="t" style="left:1882.42px;top:436.67px;font-size:12.2px;color:#111;transform:scaleX(0.8600);">0.0025</div>
<svg class="a" style="left:1750px;top:436px;" width="16" height="16" viewBox="0 0 16 16"><rect x="0.5" y="11.5" width="15" height="3" fill="#f0c080"/><path d="M1 11.5h14" stroke="#555" stroke-width="1"/><path d="M2.5 11.5v1.5M4.5 11.5v1.5M6.5 11.5v1.5M8.5 11.5v1.5M10.5 11.5v1.5M12.5 11.5v1.5M14.5 11.5v1.5" stroke="#444" stroke-width="0.8"/><path d="M0.5 6.5h4M2.5 4.5v4M11.5 6.5h4M13.5 4.5v4M2.5 8.5v3M13.5 8.5v3" stroke="#e05a3c" stroke-width="1"/></svg>
<div class="a" style="left:1699px;top:455px;width:220px;height:21px;background:#ccffff;"></div>
<div class="t" style="left:1729.11px;top:457.67px;font-size:12.2px;color:#111;">6</div>
<div class="t" style="left:1770.30px;top:457.67px;font-size:12.2px;color:#111;transform:scaleX(0.9157);">Surf2</div>
<svg class="a" style="left:1750px;top:457px;" width="16" height="16" viewBox="0 0 16 16"><path d="M0.5 7l6-6 6 5-6 8z" fill="#6ab0a8"/><path d="M3 4.5l3.5-3.5 3 2.5-3.5 3.5z" fill="#e8b040"/><path d="M6 7l3.5-3.5 2 2-3 3z" fill="#e05a3c"/><path d="M1.5 8l3-3 2.5 2.5-3 3z" fill="#a0c850"/><path d="M5 11l3-3 2 2-3 3z" fill="#40a0c0"/><rect x="12.2" y="7" width="1.6" height="6" fill="#555"/><circle cx="13" cy="13.5" r="2" fill="#e05a3c"/></svg>
<div class="t" style="left:1770.30px;top:478.67px;font-size:12.2px;color:#111;transform:scaleX(0.9319);">Screenshot</div>
<svg class="a" style="left:1750px;top:478px;" width="16" height="16" viewBox="0 0 16 16"><rect x="0.5" y="0.5" width="11" height="9" fill="#8cb8e8" stroke="#222" stroke-width="1"/><rect x="5" y="8.5" width="11" height="7" rx="1" fill="#8a8a8a"/><rect x="7" y="7.5" width="3" height="1.5" fill="#8a8a8a"/><circle cx="10.5" cy="12" r="2.6" fill="#fff"/><circle cx="10.5" cy="12" r="1.7" fill="#6aa0d8"/></svg>
<div class="a" style="left:1698px;top:913px;width:221px;height:94px;background:#f0f0f0;"></div>
<div class="a" style="left:1704px;top:927px;width:13px;height:13px;background:#fff;border:1px solid #333;border-radius:2px"></div>
<div class="t" style="left:1720.00px;top:927.93px;font-size:11.3px;color:#111;transform:scaleX(0.9736);">Add Suffix:</div>
<div class="a" style="left:1788px;top:923px;width:60px;height:22px;background:#fff;border-bottom:1px solid #777"></div>
<div class="t" style="left:1795.00px;top:925.67px;font-size:12.2px;color:#111;">-</div>
<div class="a" style="left:1857px;top:923px;width:57px;height:22px;background:#fff;border-bottom:1px solid #777"></div>
<div class="t" style="left:1861.50px;top:926.67px;font-size:12.2px;color:#111;">0</div>
<div class="a" style="left:1705.5px;top:953px;width:72px;height:20.5px;background:#fdfdfd;border:1px solid #cfcfcf;border-radius:3px"></div>
<div class="t" style="left:1721.50px;top:957.93px;font-size:11.3px;color:#111;transform:scaleX(0.9503);">Clear All</div>
<div class="a" style="left:1840px;top:953px;width:72px;height:20.5px;background:#fdfdfd;border:1px solid #cfcfcf;border-radius:3px"></div>
<div class="t" style="left:1845.00px;top:957.93px;font-size:11.3px;color:#111;transform:scaleX(0.9868);">Auto Inspect</div>
<div class="a" style="left:1705.5px;top:980.5px;width:72px;height:20.5px;background:#fdfdfd;border:1px solid #cfcfcf;border-radius:3px"></div>
<div class="t" style="left:1724.00px;top:985.43px;font-size:11.3px;color:#111;transform:scaleX(0.9443);">Header</div>
<div class="a" style="left:1840px;top:980.5px;width:72px;height:20.5px;background:#fdfdfd;border:1px solid #cfcfcf;border-radius:3px"></div>
<div class="t" style="left:1844.50px;top:985.43px;font-size:11.3px;color:#111;transform:scaleX(0.9646);">Show Report</div>
<div class="t" style="left:1760.00px;top:940.91px;font-size:19px;color:#c8c8c8;transform:scaleX(0.0001);display:none;">Windows</div>
<svg class="a" style="left:1757.8px;top:1011px;" width="16" height="16" viewBox="0 0 16 16"><circle cx="8" cy="8" r="6.5" fill="none" stroke="#fff" stroke-width="1.1"/><path d="M4 8h8M8 1.5v13M3 5h10M3 11h10" fill="none" stroke="#fff" stroke-width="0.9"/></svg>
<svg class="a" style="left:1785px;top:1011px;" width="16" height="16" viewBox="0 0 16 16"><circle cx="8" cy="8" r="6.5" fill="none" stroke="#fff" stroke-width="1.1"/><path d="M4 8h8M8 1.5v13M3 5h10M3 11h10" fill="none" stroke="#fff" stroke-width="0.9"/></svg>
<svg class="a" style="left:1812.8px;top:1011px;" width="16" height="16" viewBox="0 0 16 16"><circle cx="8" cy="8" r="6.5" fill="none" stroke="#fff" stroke-width="1.1"/><path d="M8 1.5v7h6.5" fill="none" stroke="#fff" stroke-width="1"/></svg>
<div class="a" style="left:1836px;top:1011px;width:26px;height:15.5px;background:#1565c0;"></div>
<div class="a" style="left:1892px;top:1011px;width:25px;height:15.5px;background:#1565c0;"></div>
<svg class="a" style="left:1841px;top:1011px;" width="16" height="16" viewBox="0 0 16 16"><defs><radialGradient id="sp1" cx="0.4" cy="0.35" r="0.7"><stop offset="0" stop-color="#fff"/><stop offset="0.7" stop-color="#b0b0b0"/><stop offset="1" stop-color="#777"/></radialGradient></defs><circle cx="8" cy="8" r="7" fill="url(#sp1)"/></svg>
<svg class="a" style="left:1868.7px;top:1011px;" width="16" height="16" viewBox="0 0 16 16"><defs><radialGradient id="sp2" cx="0.4" cy="0.35" r="0.7"><stop offset="0" stop-color="#fff"/><stop offset="0.7" stop-color="#b0b0b0"/><stop offset="1" stop-color="#777"/></radialGradient></defs><circle cx="8" cy="8" r="7" fill="url(#sp2)"/></svg>
<svg class="a" style="left:1897px;top:1011px;" width="16" height="16" viewBox="0 0 16 16"><defs><radialGradient id="sp3" cx="0.4" cy="0.35" r="0.7"><stop offset="0" stop-color="#fff"/><stop offset="0.7" stop-color="#b0b0b0"/><stop offset="1" stop-color="#777"/></radialGradient></defs><circle cx="8" cy="8" r="7" fill="url(#sp3)"/><path d="M8 8L15 8A7 7 0 0 1 1 8z" fill="#888"/><path d="M3 13L13 3" stroke="#fff" stroke-width="1.3"/></svg>
<div class="t" style="left:1599.00px;top:940.71px;font-size:19px;color:#bdbdbd;transform:scaleX(1.0403);opacity:0.75;">Activate Windows</div>
<div class="t" style="left:1599.00px;top:966.99px;font-size:13px;color:#bdbdbd;transform:scaleX(1.1501);opacity:0.75;">Go to Settings to activate Windows.</div></body></html>
